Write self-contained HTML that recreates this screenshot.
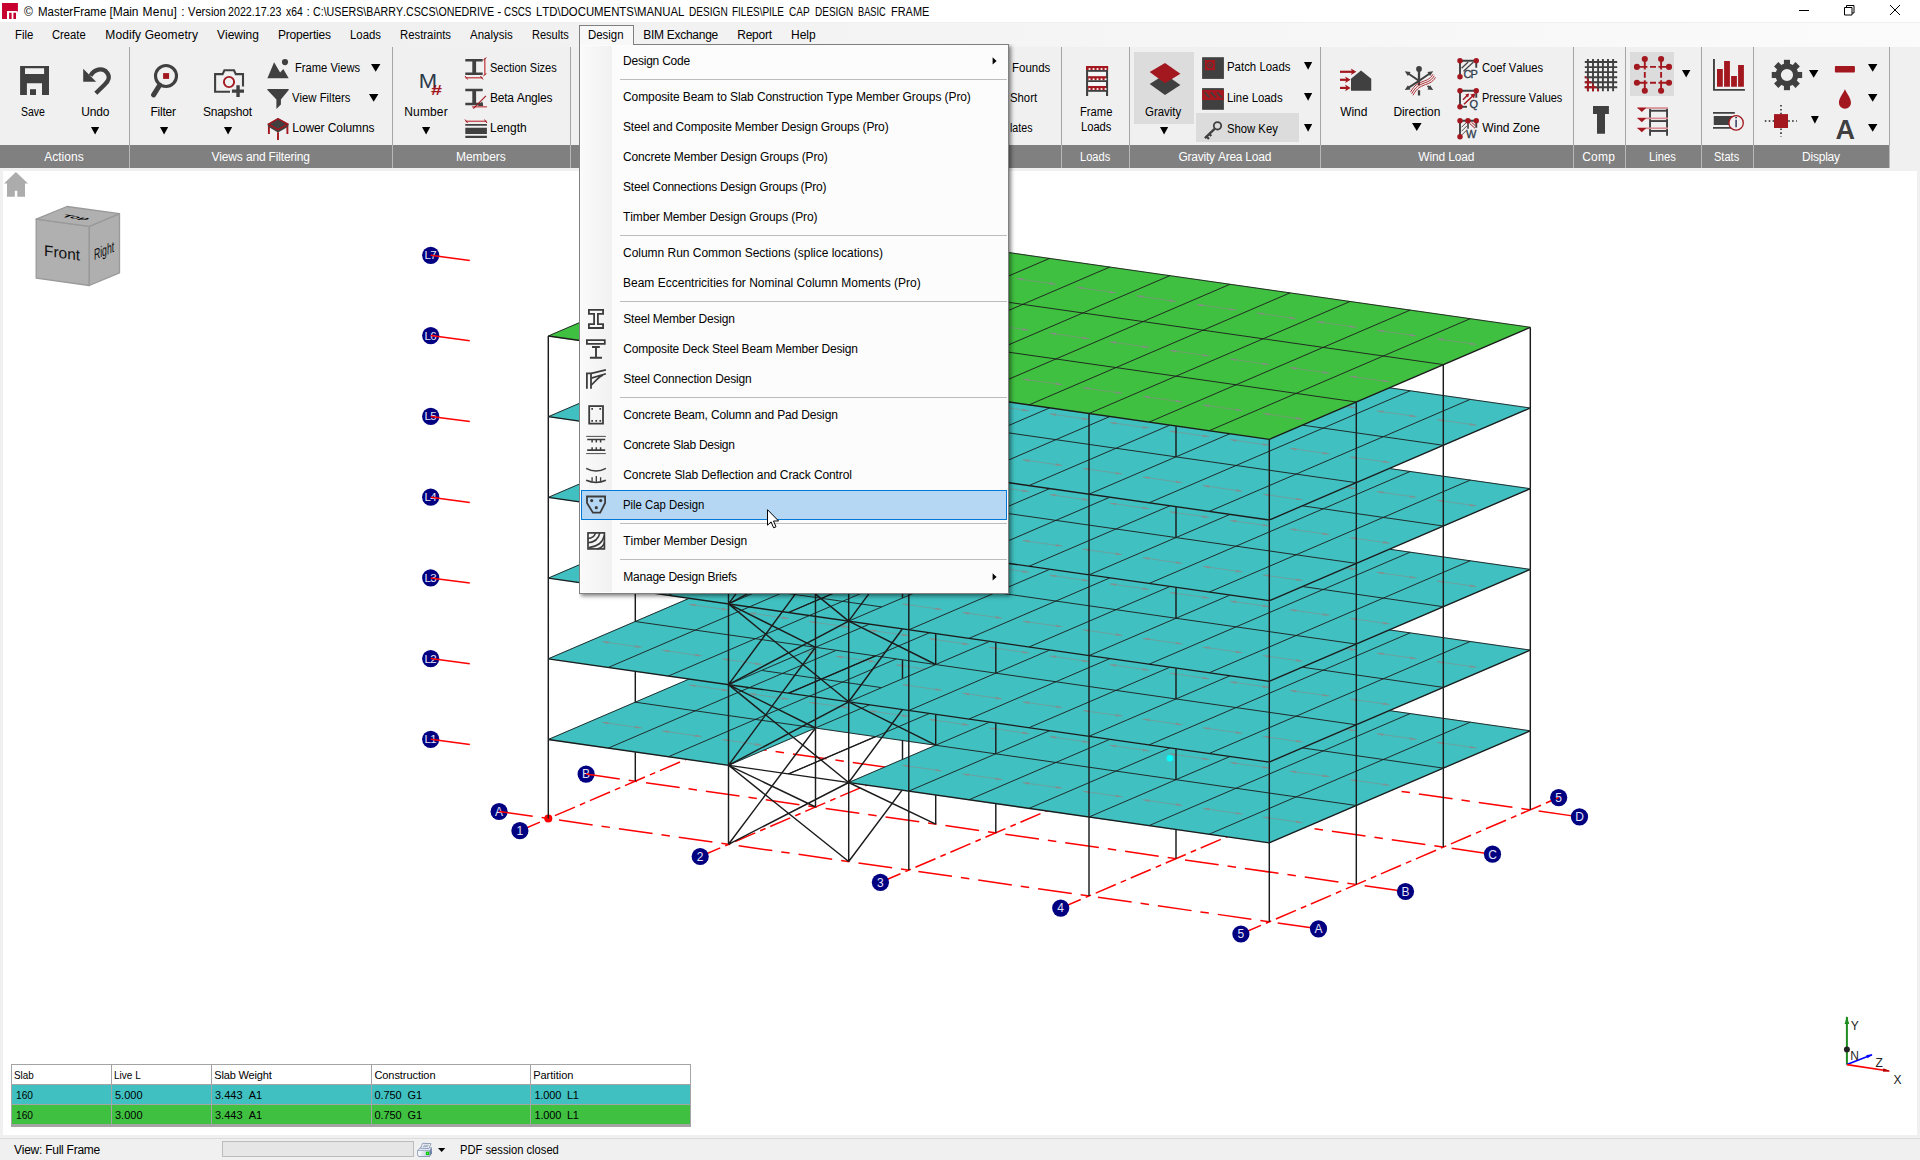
<!DOCTYPE html>
<html><head><meta charset="utf-8"><title>MasterFrame</title>
<style>
html,body{margin:0;padding:0;}
body{width:1920px;height:1160px;overflow:hidden;background:#f0f0f0;font-family:"Liberation Sans",sans-serif;position:relative;}
.t{position:absolute;white-space:nowrap;line-height:20px;height:20px;font-size:12px;font-kerning:none;}
.a{position:absolute;overflow:visible;}
.b{position:absolute;}
.gl{font-family:"Liberation Sans",sans-serif;font-size:12px;fill:#e4e4f6;text-anchor:middle;}
.ax{font-family:"Liberation Sans",sans-serif;font-size:12px;fill:#222;}
</style></head><body>

<div class="b" style="left:0;top:0;width:1920px;height:22px;background:#fff"></div>
<svg class="a" style="left:0;top:0" width="22" height="22" viewBox="0 0 22 22"><path d="M2 3H17.9V12.2Q17.6 10.9 16 10.9H7V19H2Z" fill="#c8002f"/><path d="M9.1 12.7H11.6V19H9.1ZM13.4 12.7H16V19H13.4Z" fill="#c8002f"/></svg>
<span class="t" style="left:24.00px;top:1.8px;font-size:12px;color:#000;letter-spacing:0.700px;">©</span>
<span class="t" style="left:37.50px;top:1.8px;font-size:12px;color:#000;transform:scaleX(0.9579);transform-origin:0.00px 0;">MasterFrame</span>
<span class="t" style="left:109.60px;top:1.8px;font-size:12px;color:#000;letter-spacing:-0.100px;">[Main</span>
<span class="t" style="left:142.50px;top:1.8px;font-size:12px;color:#000;letter-spacing:0.275px;">Menu]</span>
<span class="t" style="left:181.20px;top:1.8px;font-size:12px;color:#000;letter-spacing:-1.900px;">:</span>
<span class="t" style="left:187.50px;top:1.8px;font-size:12px;color:#000;transform:scaleX(0.9275);transform-origin:0.00px 0;">Version</span>
<span class="t" style="left:228.20px;top:1.8px;font-size:12px;color:#000;transform:scaleX(0.8902);transform-origin:0.00px 0;">2022.17.23</span>
<span class="t" style="left:285.80px;top:1.8px;font-size:12px;color:#000;transform:scaleX(0.8653);transform-origin:0.00px 0;">x64</span>
<span class="t" style="left:306.40px;top:1.8px;font-size:12px;color:#000;letter-spacing:-1.900px;">:</span>
<span class="t" style="left:312.70px;top:1.8px;font-size:12px;color:#000;transform:scaleX(0.8878);transform-origin:0.00px 0;">C:\USERS\BARRY.CSCS\ONEDRIVE</span>
<span class="t" style="left:497.30px;top:1.8px;font-size:12px;color:#000;letter-spacing:-0.600px;">-</span>
<span class="t" style="left:504.30px;top:1.8px;font-size:12px;color:#000;transform:scaleX(0.8228);transform-origin:0.00px 0;">CSCS</span>
<span class="t" style="left:535.70px;top:1.8px;font-size:12px;color:#000;transform:scaleX(0.9474);transform-origin:0.00px 0;">LTD\DOCUMENTS\MANUAL</span>
<span class="t" style="left:689.00px;top:1.8px;font-size:12px;color:#000;transform:scaleX(0.8413);transform-origin:0.00px 0;">DESIGN</span>
<span class="t" style="left:732.30px;top:1.8px;font-size:12px;color:#000;transform:scaleX(0.8293);transform-origin:0.00px 0;">FILES\PILE</span>
<span class="t" style="left:789.30px;top:1.8px;font-size:12px;color:#000;transform:scaleX(0.8381);transform-origin:0.00px 0;">CAP</span>
<span class="t" style="left:815.00px;top:1.8px;font-size:12px;color:#000;transform:scaleX(0.8326);transform-origin:0.00px 0;">DESIGN</span>
<span class="t" style="left:858.30px;top:1.8px;font-size:12px;color:#000;transform:scaleX(0.7694);transform-origin:0.00px 0;">BASIC</span>
<span class="t" style="left:891.00px;top:1.8px;font-size:12px;color:#000;transform:scaleX(0.9119);transform-origin:0.00px 0;">FRAME</span>
<svg class="a" style="left:1780px;top:0" width="140" height="22" viewBox="1780 0 140 22"><path d="M1799 10.5h10" stroke="#000" stroke-width="1"/><path d="M1844.5 7.5h7.5v7.5h-7.5zM1846.5 7.5v-2h7.5v7.5h-2" stroke="#000" stroke-width="1" fill="none"/><path d="M1890 5l10 10M1900 5l-10 10" stroke="#000" stroke-width="1"/></svg>
<div class="b" style="left:0;top:23px;width:1920px;height:24px;background:linear-gradient(90deg,#f0f0f0 0%,#f0f0f0 20%,#fbfbfb 100%)"></div>
<div class="b" style="left:579px;top:25px;width:55px;height:20px;background:#f8f8f8;border:1px solid #808080;border-bottom:none;box-sizing:border-box"></div>
<span class="t" style="left:15.00px;top:24.8px;font-size:12px;color:#000;transform:scaleX(0.9482);transform-origin:0.00px 0;">File</span>
<span class="t" style="left:52.30px;top:24.8px;font-size:12px;color:#000;transform:scaleX(0.9361);transform-origin:0.00px 0;">Create</span>
<span class="t" style="left:105.30px;top:24.8px;font-size:12px;color:#000;letter-spacing:0.093px;">Modify Geometry</span>
<span class="t" style="left:217.00px;top:24.8px;font-size:12px;color:#000;letter-spacing:-0.017px;">Viewing</span>
<span class="t" style="left:278.00px;top:24.8px;font-size:12px;color:#000;letter-spacing:-0.189px;">Properties</span>
<span class="t" style="left:350.00px;top:24.8px;font-size:12px;color:#000;transform:scaleX(0.9480);transform-origin:0.00px 0;">Loads</span>
<span class="t" style="left:400.00px;top:24.8px;font-size:12px;color:#000;transform:scaleX(0.9444);transform-origin:0.00px 0;">Restraints</span>
<span class="t" style="left:470.00px;top:24.8px;font-size:12px;color:#000;transform:scaleX(0.9553);transform-origin:0.00px 0;">Analysis</span>
<span class="t" style="left:532.30px;top:24.8px;font-size:12px;color:#000;transform:scaleX(0.9175);transform-origin:0.00px 0;">Results</span>
<span class="t" style="left:588.20px;top:24.8px;font-size:12px;color:#000;transform:scaleX(0.9519);transform-origin:0.00px 0;">Design</span>
<span class="t" style="left:643.20px;top:24.8px;font-size:12px;color:#000;letter-spacing:-0.273px;">BIM Exchange</span>
<span class="t" style="left:737.30px;top:24.8px;font-size:12px;color:#000;letter-spacing:-0.260px;">Report</span>
<span class="t" style="left:791.10px;top:24.8px;font-size:12px;color:#000;letter-spacing:-0.033px;">Help</span>
<div class="b" style="left:0;top:145px;width:1889px;height:23px;background:#808080"></div>
<div class="b" style="left:129.0px;top:47px;width:1px;height:98px;background:#a6a6a6"></div>
<div class="b" style="left:129.0px;top:145px;width:1px;height:23px;background:#b8b8b8"></div>
<div class="b" style="left:391.9px;top:47px;width:1px;height:98px;background:#a6a6a6"></div>
<div class="b" style="left:391.9px;top:145px;width:1px;height:23px;background:#b8b8b8"></div>
<div class="b" style="left:570.2px;top:47px;width:1px;height:98px;background:#a6a6a6"></div>
<div class="b" style="left:570.2px;top:145px;width:1px;height:23px;background:#b8b8b8"></div>
<div class="b" style="left:1060.9px;top:47px;width:1px;height:98px;background:#a6a6a6"></div>
<div class="b" style="left:1060.9px;top:145px;width:1px;height:23px;background:#b8b8b8"></div>
<div class="b" style="left:1128.9px;top:47px;width:1px;height:98px;background:#a6a6a6"></div>
<div class="b" style="left:1128.9px;top:145px;width:1px;height:23px;background:#b8b8b8"></div>
<div class="b" style="left:1319.6px;top:47px;width:1px;height:98px;background:#a6a6a6"></div>
<div class="b" style="left:1319.6px;top:145px;width:1px;height:23px;background:#b8b8b8"></div>
<div class="b" style="left:1573.0px;top:47px;width:1px;height:98px;background:#a6a6a6"></div>
<div class="b" style="left:1573.0px;top:145px;width:1px;height:23px;background:#b8b8b8"></div>
<div class="b" style="left:1624.8px;top:47px;width:1px;height:98px;background:#a6a6a6"></div>
<div class="b" style="left:1624.8px;top:145px;width:1px;height:23px;background:#b8b8b8"></div>
<div class="b" style="left:1701.0px;top:47px;width:1px;height:98px;background:#a6a6a6"></div>
<div class="b" style="left:1701.0px;top:145px;width:1px;height:23px;background:#b8b8b8"></div>
<div class="b" style="left:1753.1px;top:47px;width:1px;height:98px;background:#a6a6a6"></div>
<div class="b" style="left:1753.1px;top:145px;width:1px;height:23px;background:#b8b8b8"></div>
<div class="b" style="left:1889.1px;top:47px;width:1px;height:98px;background:#a6a6a6"></div>
<div class="b" style="left:1889.1px;top:145px;width:1px;height:23px;background:#b8b8b8"></div>
<span class="t" style="left:44.20px;top:146.8px;font-size:12px;color:#fff;letter-spacing:0.033px;">Actions</span>
<span class="t" style="left:211.50px;top:146.8px;font-size:12px;color:#fff;letter-spacing:-0.161px;">Views and Filtering</span>
<span class="t" style="left:456.00px;top:146.8px;font-size:12px;color:#fff;letter-spacing:-0.050px;">Members</span>
<span class="t" style="left:1079.50px;top:146.8px;font-size:12px;color:#fff;transform:scaleX(0.9235);transform-origin:0.00px 0;">Loads</span>
<span class="t" style="left:1178.50px;top:146.8px;font-size:12px;color:#fff;letter-spacing:-0.244px;">Gravity Area Load</span>
<span class="t" style="left:1418.30px;top:146.8px;font-size:12px;color:#fff;letter-spacing:-0.162px;">Wind Load</span>
<span class="t" style="left:1582.20px;top:146.8px;font-size:12px;color:#fff;letter-spacing:0.267px;">Comp</span>
<span class="t" style="left:1649.30px;top:146.8px;font-size:12px;color:#fff;transform:scaleX(0.9338);transform-origin:0.00px 0;">Lines</span>
<span class="t" style="left:1714.00px;top:146.8px;font-size:12px;color:#fff;transform:scaleX(0.9194);transform-origin:0.00px 0;">Stats</span>
<span class="t" style="left:1802.10px;top:146.8px;font-size:12px;color:#fff;letter-spacing:-0.233px;">Display</span>
<div class="b" style="left:1134px;top:52px;width:60px;height:71.5px;background:#dcdcdc"></div>
<div class="b" style="left:1196px;top:113px;width:103px;height:28.5px;background:#dcdcdc"></div>
<div class="b" style="left:1630px;top:52px;width:44px;height:44px;background:#dcdcdc"></div>
<span class="t" style="left:20.80px;top:101.8px;font-size:12px;color:#000;transform:scaleX(0.8759);transform-origin:0.00px 0;">Save</span>
<span class="t" style="left:81.30px;top:101.8px;font-size:12px;color:#000;letter-spacing:-0.200px;">Undo</span>
<svg class="a" style="left:91.3px;top:126.8px" width="8.2" height="7.6" viewBox="0 0 8.2 7.6"><path d="M0 0H8.2L4.1 7.6Z" fill="#000"/></svg>
<span class="t" style="left:150.40px;top:101.8px;font-size:12px;color:#000;letter-spacing:-0.220px;">Filter</span>
<svg class="a" style="left:159.6px;top:126.9px" width="8.2" height="7.6" viewBox="0 0 8.2 7.6"><path d="M0 0H8.2L4.1 7.6Z" fill="#000"/></svg>
<span class="t" style="left:203.00px;top:101.8px;font-size:12px;color:#000;letter-spacing:-0.243px;">Snapshot</span>
<svg class="a" style="left:223.5px;top:126.9px" width="8.2" height="7.6" viewBox="0 0 8.2 7.6"><path d="M0 0H8.2L4.1 7.6Z" fill="#000"/></svg>
<span class="t" style="left:295.40px;top:57.8px;font-size:12px;color:#000;transform:scaleX(0.9312);transform-origin:0.00px 0;">Frame Views</span>
<svg class="a" style="left:370.6px;top:64.1px" width="9.4" height="7.8" viewBox="0 0 9.4 7.8"><path d="M0 0H9.4L4.7 7.8Z" fill="#000"/></svg>
<span class="t" style="left:292.30px;top:87.8px;font-size:12px;color:#000;transform:scaleX(0.9434);transform-origin:0.00px 0;">View Filters</span>
<svg class="a" style="left:369.3px;top:94.2px" width="9.4" height="7.8" viewBox="0 0 9.4 7.8"><path d="M0 0H9.4L4.7 7.8Z" fill="#000"/></svg>
<span class="t" style="left:292.30px;top:117.8px;font-size:12px;color:#000;letter-spacing:-0.092px;">Lower Columns</span>
<span class="t" style="left:404.30px;top:101.8px;font-size:12px;color:#000;letter-spacing:0.140px;">Number</span>
<svg class="a" style="left:422.2px;top:126.8px" width="8.2" height="7.6" viewBox="0 0 8.2 7.6"><path d="M0 0H8.2L4.1 7.6Z" fill="#000"/></svg>
<span class="t" style="left:490.00px;top:57.8px;font-size:12px;color:#000;transform:scaleX(0.9175);transform-origin:0.00px 0;">Section Sizes</span>
<span class="t" style="left:490.00px;top:87.8px;font-size:12px;color:#000;letter-spacing:-0.230px;">Beta Angles</span>
<span class="t" style="left:490.00px;top:117.8px;font-size:12px;color:#000;letter-spacing:0.000px;">Length</span>
<span class="t" style="left:1011.50px;top:57.8px;font-size:12px;color:#000;transform:scaleX(0.9575);transform-origin:0.00px 0;">Founds</span>
<span class="t" style="left:1009.60px;top:87.8px;font-size:12px;color:#000;transform:scaleX(0.9443);transform-origin:0.00px 0;">Short</span>
<span class="t" style="left:1009.80px;top:117.8px;font-size:12px;color:#000;transform:scaleX(0.8893);transform-origin:0.00px 0;">lates</span>
<span class="t" style="left:1079.50px;top:101.8px;font-size:12px;color:#000;transform:scaleX(0.9337);transform-origin:0.00px 0;">Frame</span>
<span class="t" style="left:1080.50px;top:116.8px;font-size:12px;color:#000;transform:scaleX(0.9297);transform-origin:0.00px 0;">Loads</span>
<span class="t" style="left:1145.40px;top:101.8px;font-size:12px;color:#000;transform:scaleX(0.9526);transform-origin:0.00px 0;">Gravity</span>
<svg class="a" style="left:1159.5px;top:126.8px" width="8.2" height="7.6" viewBox="0 0 8.2 7.6"><path d="M0 0H8.2L4.1 7.6Z" fill="#000"/></svg>
<span class="t" style="left:1227.10px;top:56.8px;font-size:12px;color:#000;transform:scaleX(0.9520);transform-origin:0.00px 0;">Patch Loads</span>
<svg class="a" style="left:1304.4px;top:62.3px" width="8.2" height="7.8" viewBox="0 0 8.2 7.8"><path d="M0 0H8.2L4.1 7.8Z" fill="#000"/></svg>
<span class="t" style="left:1227.10px;top:87.8px;font-size:12px;color:#000;transform:scaleX(0.9472);transform-origin:0.00px 0;">Line Loads</span>
<svg class="a" style="left:1304.4px;top:93.2px" width="8.2" height="7.8" viewBox="0 0 8.2 7.8"><path d="M0 0H8.2L4.1 7.8Z" fill="#000"/></svg>
<span class="t" style="left:1227.10px;top:118.8px;font-size:12px;color:#000;transform:scaleX(0.9407);transform-origin:0.00px 0;">Show Key</span>
<svg class="a" style="left:1304.4px;top:123.9px" width="8.2" height="7.8" viewBox="0 0 8.2 7.8"><path d="M0 0H8.2L4.1 7.8Z" fill="#000"/></svg>
<span class="t" style="left:1340.20px;top:101.8px;font-size:12px;color:#000;letter-spacing:-0.067px;">Wind</span>
<span class="t" style="left:1393.40px;top:101.8px;font-size:12px;color:#000;letter-spacing:-0.050px;">Direction</span>
<svg class="a" style="left:1412.3px;top:122.8px" width="9.6" height="7.9" viewBox="0 0 9.6 7.9"><path d="M0 0H9.6L4.8 7.9Z" fill="#000"/></svg>
<span class="t" style="left:1482.30px;top:57.8px;font-size:12px;color:#000;transform:scaleX(0.9364);transform-origin:0.00px 0;">Coef Values</span>
<span class="t" style="left:1482.30px;top:87.8px;font-size:12px;color:#000;transform:scaleX(0.9117);transform-origin:0.00px 0;">Pressure Values</span>
<span class="t" style="left:1482.30px;top:117.8px;font-size:12px;color:#000;letter-spacing:-0.062px;">Wind Zone</span>
<svg class="a" style="left:1682.4px;top:70.2px" width="8.4" height="7.5" viewBox="0 0 8.4 7.5"><path d="M0 0H8.4L4.2 7.5Z" fill="#000"/></svg>
<svg class="a" style="left:1808.6px;top:69.9px" width="9.4" height="7.8" viewBox="0 0 9.4 7.8"><path d="M0 0H9.4L4.7 7.8Z" fill="#000"/></svg>
<svg class="a" style="left:1810.5px;top:115.7px" width="7.8" height="7.8" viewBox="0 0 7.8 7.8"><path d="M0 0H7.8L3.9 7.8Z" fill="#000"/></svg>
<svg class="a" style="left:1868.3px;top:64.1px" width="9.4" height="7.8" viewBox="0 0 9.4 7.8"><path d="M0 0H9.4L4.7 7.8Z" fill="#000"/></svg>
<svg class="a" style="left:1868.3px;top:94.0px" width="9.4" height="7.8" viewBox="0 0 9.4 7.8"><path d="M0 0H9.4L4.7 7.8Z" fill="#000"/></svg>
<svg class="a" style="left:1868.3px;top:123.9px" width="9.4" height="7.8" viewBox="0 0 9.4 7.8"><path d="M0 0H9.4L4.7 7.8Z" fill="#000"/></svg>
<svg class="a" style="left:0;top:0" width="1920" height="170" viewBox="0 0 1920 170"><path d="M20.1 66.1H49V95H42V83.2H26.9V95H20.1ZM25 68.2V73.9H44.1V68.2Z" fill="#404040" fill-rule="evenodd"/><rect x="30" y="89.2" width="6" height="5.8" fill="#404040"/><path d="M83.2 68.8V81.8H96.1Z" fill="#404040"/><path d="M90.5 75.8C94 69.2 102.5 67.2 106.8 72.3C110.6 76.8 108.3 81.3 105 84.2L95.8 93.3" fill="none" stroke="#404040" stroke-width="4.3"/><circle cx="166" cy="76" r="10.5" fill="none" stroke="#404040" stroke-width="3.1"/><path d="M159.6 85.2L153.6 94.8" stroke="#404040" stroke-width="5" stroke-linecap="round"/><rect x="163.1" y="73.1" width="6" height="5.8" fill="#a3171f"/><path d="M230 91.7H215.1V74.1H222.6L224.4 70.2H234L235.8 74.1H243V86.5" fill="none" stroke="#404040" stroke-width="2.1"/><circle cx="229" cy="82" r="5.1" fill="none" stroke="#a3171f" stroke-width="1.9"/><path d="M231.9 91.15H244M238.05 85.3V96.9" stroke="#404040" stroke-width="3.4"/><path d="M267.4 78.3L274.1 62.3L280.1 72.5L283.3 69L288.7 78.3Z" fill="#404040"/><circle cx="285" cy="62.1" r="3.1" fill="#404040"/><path d="M267.4 88.9H288.7V90L280.9 99.5V104.5L276.4 109V99.5L267.4 90Z" fill="#404040"/><path d="M267.8 124.1L278 118.1L288.5 124.1V126.6L278 132.4L267.8 126.6Z" fill="#404040"/><path d="M268.6 124.1L278 118.9L287.6 124.1L278 129.6Z" fill="none" stroke="#a3171f" stroke-width="1.6"/><path d="M268.9 126.8V134M287.4 126.8V134M278 132.3V139.9" stroke="#a3171f" stroke-width="1.9"/><text transform="translate(427.9 87.5) scale(1.13 1)" style="font-family:'Liberation Sans',sans-serif;font-size:19.5px;text-anchor:middle" fill="#2d3a4c">M</text><text transform="translate(436.3 95.2) scale(1.45 1.02)" style="font-family:'Liberation Sans',sans-serif;font-size:13.5px;font-weight:bold;font-style:italic;text-anchor:middle" fill="#a3171f">#</text><path d="M465.3 60.15H482.7M465.3 73.8H482.7" stroke="#404040" stroke-width="2.5"/><path d="M474.2 60V74" stroke="#404040" stroke-width="3.8"/><path d="M484.8 58.6V75M465.5 77.7H482.6" stroke="#c8585f" stroke-width="1.5"/><path d="M483.3 60L486.4 57.6M483.3 76L486.4 73.5M465 76L467.6 79.5M480.5 76L483 79.5" stroke="#a3171f" stroke-width="1"/><path d="M465.3 90.1H482.7M465.3 104H482.7" stroke="#404040" stroke-width="2.5"/><path d="M474.2 90V104" stroke="#404040" stroke-width="3.8"/><path d="M477.5 106.2H483.3L482.2 101.4Z" fill="#404040"/><path d="M472 106.8H487" stroke="#c8585f" stroke-width="1.4"/><path d="M473.3 108.6L485.9 95.9" stroke="#a3171f" stroke-width="1.1"/><path d="M465.5 121.3H486.8" stroke="#c8585f" stroke-width="1.5"/><path d="M465 119.5L467.6 123M484.4 119.5L487 123" stroke="#a3171f" stroke-width="1"/><path d="M465.3 124.1H486.9V125.8H465.3ZM465.3 127.8H486.9V133.9H465.3ZM465.3 135.8H486.9V137.9H465.3Z" fill="#404040"/><path d="M1087.1 66V95.9M1107.05 66V95.9" stroke="#404040" stroke-width="2.1"/><rect x="1086.05" y="66" width="22.05" height="4" fill="#a3171f"/><rect x="1088.1" y="70" width="17.9" height="1.8" fill="#404040"/><rect x="1088.6" y="68.2" width="1.9" height="1.7" fill="#fff"/><rect x="1092.6" y="68.2" width="1.9" height="1.7" fill="#fff"/><rect x="1096.6" y="68.2" width="1.9" height="1.7" fill="#fff"/><rect x="1100.6" y="68.2" width="1.9" height="1.7" fill="#fff"/><rect x="1104.6" y="68.2" width="1.9" height="1.7" fill="#fff"/><rect x="1088.1" y="76.2" width="17.9" height="4" fill="#a3171f"/><rect x="1088.1" y="80.2" width="17.9" height="1.8" fill="#404040"/><rect x="1088.6" y="78.4" width="1.9" height="1.7" fill="#fff"/><rect x="1092.6" y="78.4" width="1.9" height="1.7" fill="#fff"/><rect x="1096.6" y="78.4" width="1.9" height="1.7" fill="#fff"/><rect x="1100.6" y="78.4" width="1.9" height="1.7" fill="#fff"/><rect x="1104.6" y="78.4" width="1.9" height="1.7" fill="#fff"/><rect x="1088.1" y="86" width="17.9" height="4" fill="#a3171f"/><rect x="1088.1" y="90" width="17.9" height="1.8" fill="#404040"/><rect x="1088.6" y="88.2" width="1.9" height="1.7" fill="#fff"/><rect x="1092.6" y="88.2" width="1.9" height="1.7" fill="#fff"/><rect x="1096.6" y="88.2" width="1.9" height="1.7" fill="#fff"/><rect x="1100.6" y="88.2" width="1.9" height="1.7" fill="#fff"/><rect x="1104.6" y="88.2" width="1.9" height="1.7" fill="#fff"/><rect x="1088.4" y="72.5" width="17.4" height="3" fill="#f8f8f8"/><rect x="1088.4" y="82.4" width="17.4" height="3" fill="#f8f8f8"/><path d="M1149.7 84.1L1165 74.2L1180.4 85L1165 95.1Z" fill="#404040"/><path d="M1149.7 72.1L1165 62.9L1180.4 73.8L1165 83.2Z" fill="#a3171f"/><rect x="1202.1" y="57.2" width="21.8" height="21.7" fill="#404040"/><rect x="1205" y="60" width="10.1" height="10.1" fill="#a3171f"/><circle cx="1210" cy="65.1" r="2.7" fill="none" stroke="#404040" stroke-width="0.9"/><path d="M1208.2 63.3L1211.8 66.9M1211.8 63.3L1208.2 66.9" stroke="#404040" stroke-width="0.8"/><rect x="1202.1" y="88.1" width="21.8" height="21.7" fill="#404040"/><rect x="1202.1" y="90" width="21.8" height="10" fill="#a3171f"/><path d="M1204.5 92.3L1209.5 97.5M1210.8 92.3L1215.8 97.5M1217 92.3L1222 97.5" stroke="#404040" stroke-width="1.8"/><circle cx="1217.5" cy="125.8" r="3.7" fill="none" stroke="#404040" stroke-width="1.8"/><path d="M1214.6 128.8L1204.9 138.2M1206.6 136.5L1209 139M1209.3 134L1211.3 136" stroke="#404040" stroke-width="2.3"/><path d="M1351 90.8V78.75L1361 70.4L1371.25 78.75V90.8Z" fill="#404040"/><path d="M1340 71.8H1353.2" stroke="#a3171f" stroke-width="2.2"/><path d="M1350.9 68.5L1356.4 71.8L1350.9 75.1L1352.2 71.8Z" fill="#a3171f"/><path d="M1340 79.8H1347.4" stroke="#a3171f" stroke-width="2.2"/><path d="M1345.1 76.5L1350.6 79.8L1345.1 83.1L1346.4 79.8Z" fill="#a3171f"/><path d="M1340 87.9H1347.4" stroke="#a3171f" stroke-width="2.2"/><path d="M1345.1 84.6L1350.6 87.9L1345.1 91.2L1346.4 87.9Z" fill="#a3171f"/><circle cx="1419" cy="69" r="2.9" fill="#404040"/><path d="M1419 69V85.2M1419 90.2V95.4" stroke="#404040" stroke-width="2.3"/><path d="M1407.5 73L1419 80.8L1430.5 73M1407.5 88.3L1419 80.8M1427.5 86L1430.5 88" fill="none" stroke="#404040" stroke-width="2"/><path d="M1404.8 71.2L1410.6 71.9L1407.9 76ZM1433.2 71.2L1427.4 71.9L1430.1 76ZM1404.8 90L1410.6 89.4L1407.9 85.2ZM1433.2 90L1427.4 89.4L1430.1 85.2Z" fill="#404040"/><path d="M1410.46 92.19C1414.76 84.44 1418.26 83.44 1421.76 81.94S1429.76 79.94 1432.96 74.24" fill="none" stroke="#a3171f" stroke-width="0.9"/><path d="M1411.7 93.75C1416 86 1419.5 85 1423 83.5S1431 81.5 1434.2 75.8" fill="none" stroke="#a3171f" stroke-width="0.9"/><path d="M1412.94 95.31C1417.24 87.56 1420.74 86.56 1424.24 85.06S1432.24 83.06 1435.44 77.36" fill="none" stroke="#a3171f" stroke-width="0.9"/><path d="M1476.25 67.8V60.8M1476.25 60.8H1460V76.8" fill="none" stroke="#404040" stroke-width="1.9"/><path d="M1461.6 68.3L1468.2 62M1463.5 71.3L1473.5 62" stroke="#404040" stroke-width="1.2"/><text x="1463.4" y="78.3" style="font-family:'Liberation Sans',sans-serif;font-size:11px;letter-spacing:-0.8px" fill="#2d3a4c" stroke="#2d3a4c" stroke-width="0.3">CP</text><circle cx="1460" cy="60.8" r="2.75" fill="#a3171f"/><circle cx="1476.25" cy="60.8" r="2.75" fill="#a3171f"/><circle cx="1460" cy="76.8" r="2.75" fill="#a3171f"/><path d="M1476.25 97.8V90.8M1476.25 90.8H1460V106.8" fill="none" stroke="#404040" stroke-width="1.9"/><path d="M1460 106.8H1467" stroke="#404040" stroke-width="1.9"/><path d="M1463 99.8L1467.5 95.3M1464 104.3L1473.5 95.3" stroke="#a3171f" stroke-width="1.5"/><path d="M1469.3 93.4L1465.3 94.6L1468 97.6ZM1475.5 93.2L1470.3 94.6L1474 98.4Z" fill="#a3171f"/><text x="1469.6" y="108.1" style="font-family:'Liberation Sans',sans-serif;font-size:11px" fill="#2d3a4c" stroke="#2d3a4c" stroke-width="0.3">Q</text><circle cx="1460" cy="90.8" r="2.75" fill="#a3171f"/><circle cx="1476.25" cy="90.8" r="2.75" fill="#a3171f"/><circle cx="1460" cy="106.8" r="2.75" fill="#a3171f"/><path d="M1476.25 127.8V120.8M1476.25 120.8H1460V136.8" fill="none" stroke="#404040" stroke-width="1.9"/><path d="M1468 120.8V128.8" stroke="#404040" stroke-width="1.6"/><path d="M1461.5 127.3L1466.5 122.3M1461.5 131.3L1467 125.8M1462 134.8L1466 130.8" stroke="#404040" stroke-width="0.9"/><path d="M1469.5 123.3L1475 128.3M1471.5 122.3L1475.5 125.8" stroke="#a3171f" stroke-width="1"/><text x="1466" y="138.2" style="font-family:'Liberation Sans',sans-serif;font-size:11px" fill="#2d3a4c" stroke="#2d3a4c" stroke-width="0.3">W</text><circle cx="1460" cy="120.8" r="2.75" fill="#a3171f"/><circle cx="1476.25" cy="120.8" r="2.75" fill="#a3171f"/><circle cx="1460" cy="136.8" r="2.75" fill="#a3171f"/><circle cx="1467.9" cy="120.8" r="2.75" fill="#a3171f"/><path d="M1587.9 58.9V91.25M1593 58.9V91.25M1598.1 58.9V91.25M1602.9 58.9V91.25M1608 58.9V91.25M1613.1 58.9V91.25M1584.8 62H1617.2M1584.8 67.1H1617.2M1584.8 72.1H1617.2M1584.8 77.2H1617.2M1584.8 82.25H1617.2M1584.8 87.3H1617.2" stroke="#404040" stroke-width="1.9"/><clipPath id="cg"><path d="M1584 74.5L1601 92H1584Z"/></clipPath><path d="M1587.9 58.9V91.25M1593 58.9V91.25M1598.1 58.9V91.25M1602.9 58.9V91.25M1608 58.9V91.25M1613.1 58.9V91.25M1584.8 62H1617.2M1584.8 67.1H1617.2M1584.8 72.1H1617.2M1584.8 77.2H1617.2M1584.8 82.25H1617.2M1584.8 87.3H1617.2" stroke="#a3171f" stroke-width="1.9" clip-path="url(#cg)"/><path d="M1593 106.1H1608.9V113.9H1605V133.7H1597V113.9H1593Z" fill="#404040"/><path d="M1644.8 59.1V69.5M1661.1 59.1V69.5M1644.8 80.2V90.8M1661.1 80.2V90.8M1636.9 66.9H1647.4M1658.5 66.9H1669M1636.9 82.8H1647.4M1658.5 82.8H1669" stroke="#a3171f" stroke-width="1.9"/><path d="M1650 66.9H1656M1650 82.8H1656M1644.8 72H1644.8V77.8M1661.1 72V77.8" stroke="#a3171f" stroke-width="1.9"/><circle cx="1644.8" cy="59.1" r="3.05" fill="#a3171f"/><circle cx="1661.1" cy="59.1" r="3.05" fill="#a3171f"/><circle cx="1644.8" cy="90.8" r="3.05" fill="#a3171f"/><circle cx="1661.1" cy="90.8" r="3.05" fill="#a3171f"/><circle cx="1636.9" cy="66.9" r="3.05" fill="#a3171f"/><circle cx="1636.9" cy="82.8" r="3.05" fill="#a3171f"/><circle cx="1669" cy="66.9" r="3.05" fill="#a3171f"/><circle cx="1669" cy="82.8" r="3.05" fill="#a3171f"/><path d="M1650.05 108.6V135.8M1667.05 108.6V135.8" stroke="#404040" stroke-width="1.9"/><rect x="1637.3" y="107.2" width="30.7" height="1.7" fill="#d98d92"/><rect x="1650" y="109.8" width="17" height="1.9" fill="#404040"/><path d="M1637.3 107.8H1646.3L1641.8 112Z" fill="#a3171f"/><rect x="1637.3" y="117.5" width="30.7" height="1.7" fill="#d98d92"/><rect x="1650" y="120.1" width="17" height="1.9" fill="#404040"/><path d="M1637.3 118.1H1646.3L1641.8 122.3Z" fill="#a3171f"/><rect x="1637.3" y="127.4" width="30.7" height="1.7" fill="#d98d92"/><rect x="1650" y="130" width="17" height="1.9" fill="#404040"/><path d="M1637.3 128H1646.3L1641.8 132.2Z" fill="#a3171f"/><path d="M1713.95 58.9V89.85H1744.9" fill="none" stroke="#404040" stroke-width="1.9"/><path d="M1717 69H1722.8V86.8H1717ZM1724.1 61.1H1729.9V86.8H1724.1ZM1731.1 76.1H1736.9V86.8H1731.1ZM1738.1 65H1743.9V86.8H1738.1Z" fill="#a3171f"/><path d="M1713 112.1H1734.8V113.75H1713ZM1713.75 116.1H1734.4V125H1713.75ZM1713 127.1H1731V128.75H1713Z" fill="#404040"/><circle cx="1736.1" cy="122.9" r="7.2" fill="#f0f0f0" stroke="#a3171f" stroke-width="1.3"/><path d="M1736.1 119.8V127.3" stroke="#333a5c" stroke-width="1.5"/><circle cx="1736.1" cy="117.6" r="0.95" fill="#333a5c"/><circle cx="1786.95" cy="75" r="8.75" fill="none" stroke="#404040" stroke-width="5.3"/><rect x="1783.9" y="59.8" width="6.1" height="5.8" fill="#404040" transform="rotate(0 1786.95 75)"/><rect x="1783.9" y="59.8" width="6.1" height="5.8" fill="#404040" transform="rotate(45 1786.95 75)"/><rect x="1783.9" y="59.8" width="6.1" height="5.8" fill="#404040" transform="rotate(90 1786.95 75)"/><rect x="1783.9" y="59.8" width="6.1" height="5.8" fill="#404040" transform="rotate(135 1786.95 75)"/><rect x="1783.9" y="59.8" width="6.1" height="5.8" fill="#404040" transform="rotate(180 1786.95 75)"/><rect x="1783.9" y="59.8" width="6.1" height="5.8" fill="#404040" transform="rotate(225 1786.95 75)"/><rect x="1783.9" y="59.8" width="6.1" height="5.8" fill="#404040" transform="rotate(270 1786.95 75)"/><rect x="1783.9" y="59.8" width="6.1" height="5.8" fill="#404040" transform="rotate(315 1786.95 75)"/><path d="M1764.8 120.9H1796.8M1781 105V136.8" stroke="#222" stroke-width="1.5" stroke-dasharray="1.6 2.3"/><rect x="1774" y="114.1" width="14" height="13.9" fill="#a3171f"/><rect x="1834.9" y="66" width="20" height="6.5" rx="1" fill="#a3171f"/><path d="M1844.95 89.3C1847.5 94.5 1851 98.5 1851 102.8A6.05 6.05 0 0 1 1838.9 102.8C1838.9 98.5 1842.4 94.5 1844.95 89.3Z" fill="#a3171f"/><text x="1845.2" y="138.7" style="font-family:'Liberation Sans',sans-serif;font-size:27px;font-weight:bold;text-anchor:middle" fill="#404040">A</text><path d="M1835.3 138.7L1842.3 120.5" stroke="#f0f0f0" stroke-width="0.9"/></svg>
<div class="b" style="left:3px;top:171px;width:1914px;height:964px;background:#fff"></div>
<div class="b" style="left:0;top:1138px;width:1920px;height:1px;background:#dcdcdc"></div>
<svg class="a" style="left:0;top:0" width="1920" height="1160" viewBox="0 0 1920 1160">
<circle cx="837.7" cy="694.3" r="8.6" fill="#000080"/>
<text x="837.7" y="698.6" class="gl">1</text>
<circle cx="1017.9" cy="720.2" r="8.6" fill="#000080"/>
<text x="1017.9" y="724.5" class="gl">2</text>
<circle cx="1198.2" cy="746" r="8.6" fill="#000080"/>
<text x="1198.2" y="750.3" class="gl">3</text>
<circle cx="1378.4" cy="771.8" r="8.6" fill="#000080"/>
<text x="1378.4" y="776.1" class="gl">4</text>
<circle cx="1558.7" cy="797.6" r="8.6" fill="#000080"/>
<text x="1558.7" y="801.9" class="gl">5</text>
<circle cx="499.1" cy="811.5" r="8.6" fill="#000080"/>
<text x="499.1" y="815.8" class="gl">A</text>
<circle cx="586.1" cy="774.1" r="8.6" fill="#000080"/>
<text x="586.1" y="778.4" class="gl">B</text>
<circle cx="673.1" cy="736.8" r="8.6" fill="#000080"/>
<text x="673.1" y="741.1" class="gl">C</text>
<circle cx="760.1" cy="699.5" r="8.6" fill="#000080"/>
<text x="760.1" y="703.8" class="gl">D</text>
<path d="M499.1 811.5L1318.5 928.8M586.1 774.1L1405.5 891.5M673.1 736.8L1492.5 854.2M760.1 699.5L1579.5 816.9" stroke="#ff0000" stroke-width="1.5" stroke-dasharray="34 9 8.5 9" fill="none"/>
<path d="M519.9 830.7L837.7 694.3M700.2 856.5L1017.9 720.2M880.4 882.3L1198.2 746M1060.7 908.1L1378.4 771.8M1240.9 934L1558.7 797.6" stroke="#ff0000" stroke-width="1.5" stroke-dasharray="21.8 5.4 5.8 5.1" fill="none"/>
<circle cx="519.9" cy="830.7" r="8.6" fill="#000080"/>
<text x="519.9" y="835" class="gl">1</text>
<circle cx="700.2" cy="856.5" r="8.6" fill="#000080"/>
<text x="700.2" y="860.8" class="gl">2</text>
<circle cx="880.4" cy="882.3" r="8.6" fill="#000080"/>
<text x="880.4" y="886.6" class="gl">3</text>
<circle cx="1060.7" cy="908.1" r="8.6" fill="#000080"/>
<text x="1060.7" y="912.4" class="gl">4</text>
<circle cx="1240.9" cy="934" r="8.6" fill="#000080"/>
<text x="1240.9" y="938.3" class="gl">5</text>
<circle cx="1318.5" cy="928.8" r="8.6" fill="#000080"/>
<text x="1318.5" y="933.1" class="gl">A</text>
<circle cx="1405.5" cy="891.5" r="8.6" fill="#000080"/>
<text x="1405.5" y="895.8" class="gl">B</text>
<circle cx="1492.5" cy="854.2" r="8.6" fill="#000080"/>
<text x="1492.5" y="858.5" class="gl">C</text>
<circle cx="1579.5" cy="816.9" r="8.6" fill="#000080"/>
<text x="1579.5" y="821.2" class="gl">D</text>
<circle cx="548.3" cy="818.5" r="4" fill="#ff0000"/>
<path d="M548.3 818.5L548.3 739.5M635.3 781.2L635.3 702.2M722.3 743.8L722.3 664.8M809.3 706.5L809.3 627.5M728.5 844.3L728.5 765.3M815.5 807L815.5 728M902.5 769.7L902.5 690.7M989.5 732.3L989.5 653.3M908.8 870.1L908.8 791.1M995.8 832.8L995.8 753.8M1082.8 795.5L1082.8 716.5M1169.8 758.2L1169.8 679.2M1089 896L1089 817M1176 858.6L1176 779.6M1263 821.3L1263 742.3M1350 784L1350 705M1269.3 921.8L1269.3 842.8M1356.3 884.5L1356.3 805.5M1443.3 847.1L1443.3 768.1M1530.3 809.8L1530.3 730.8M848.7 861.5L848.7 782.5M935.7 824.2L935.7 745.2M728.5 844.3L848.7 782.5M848.7 861.5L728.5 765.3M728.5 844.3L815.5 728M815.5 807L728.5 765.3M848.7 861.5L935.7 745.2M935.7 824.2L848.7 782.5" stroke="#1c1c1c" stroke-width="1.45" fill="none"/>
<path d="M548.3 739.5L608.4 748.1L695.4 710.8L635.3 702.2ZM635.3 702.2L695.4 710.8L782.4 673.4L722.3 664.8ZM722.3 664.8L782.4 673.4L869.4 636.1L809.3 627.5ZM608.4 748.1L668.5 756.7L755.5 719.4L695.4 710.8ZM695.4 710.8L755.5 719.4L842.5 682.1L782.4 673.4ZM782.4 673.4L842.5 682.1L929.5 644.7L869.4 636.1ZM668.5 756.7L728.5 765.3L815.5 728L755.5 719.4ZM755.5 719.4L815.5 728L902.5 690.7L842.5 682.1ZM842.5 682.1L902.5 690.7L989.5 653.3L929.5 644.7ZM815.5 728L875.6 736.6L962.6 699.3L902.5 690.7ZM902.5 690.7L962.6 699.3L1049.6 661.9L989.5 653.3ZM875.6 736.6L935.7 745.2L1022.7 707.9L962.6 699.3ZM962.6 699.3L1022.7 707.9L1109.7 670.6L1049.6 661.9ZM848.7 782.5L908.8 791.1L995.8 753.8L935.7 745.2ZM935.7 745.2L995.8 753.8L1082.8 716.5L1022.7 707.9ZM1022.7 707.9L1082.8 716.5L1169.8 679.2L1109.7 670.6ZM908.8 791.1L968.9 799.8L1055.9 762.4L995.8 753.8ZM995.8 753.8L1055.9 762.4L1142.9 725.1L1082.8 716.5ZM1082.8 716.5L1142.9 725.1L1229.9 687.8L1169.8 679.2ZM968.9 799.8L1029 808.4L1116 771L1055.9 762.4ZM1055.9 762.4L1116 771L1203 733.7L1142.9 725.1ZM1142.9 725.1L1203 733.7L1290 696.4L1229.9 687.8ZM1029 808.4L1089 817L1176 779.6L1116 771ZM1116 771L1176 779.6L1263 742.3L1203 733.7ZM1203 733.7L1263 742.3L1350 705L1290 696.4ZM1089 817L1149.1 825.6L1236.1 788.3L1176 779.6ZM1176 779.6L1236.1 788.3L1323.1 750.9L1263 742.3ZM1263 742.3L1323.1 750.9L1410.1 713.6L1350 705ZM1149.1 825.6L1209.2 834.2L1296.2 796.9L1236.1 788.3ZM1236.1 788.3L1296.2 796.9L1383.2 759.5L1323.1 750.9ZM1323.1 750.9L1383.2 759.5L1470.2 722.2L1410.1 713.6ZM1209.2 834.2L1269.3 842.8L1356.3 805.5L1296.2 796.9ZM1296.2 796.9L1356.3 805.5L1443.3 768.1L1383.2 759.5ZM1383.2 759.5L1443.3 768.1L1530.3 730.8L1470.2 722.2Z" fill="#40c0c0" stroke="#40c0c0" stroke-width="0.6"/>
<path d="M602 722.3L641.7 728M689 685L728.7 690.6M776 647.6L815.7 653.3M662.1 730.9L701.8 736.6M749.1 693.6L788.8 699.3M836.1 656.2L875.8 661.9M722.2 739.5L761.8 745.2M809.2 702.2L848.8 707.9M896.2 664.9L935.8 670.5M869.3 710.8L908.9 716.5M956.3 673.5L995.9 679.1M929.3 719.4L969 725.1M1016.3 682.1L1056 687.8M902.4 765.3L942.1 771M989.4 728L1029.1 733.7M1076.4 690.7L1116.1 696.4M962.5 773.9L1002.2 779.6M1049.5 736.6L1089.2 742.3M1136.5 699.3L1176.2 705M1022.6 782.6L1062.3 788.2M1109.6 745.2L1149.3 750.9M1196.6 707.9L1236.3 713.6M1082.7 791.2L1122.3 796.8M1169.7 753.8L1209.3 759.5M1256.7 716.5L1296.3 722.2M1142.8 799.8L1182.4 805.5M1229.8 762.4L1269.4 768.1M1316.8 725.1L1356.4 730.8M1202.8 808.4L1242.5 814.1M1289.8 771.1L1329.5 776.7M1376.8 733.7L1416.5 739.4M1262.9 817L1302.6 822.7M1349.9 779.7L1389.6 785.3M1436.9 742.3L1476.6 748" stroke="#8a8a8a" stroke-opacity="0.6" stroke-width="1" fill="none"/>
<path d="M602 722.3L609.1 722L607.9 724.4ZM641.7 728L635.8 725.8L634.6 728.2ZM689 685L696.1 684.7L694.9 687.1ZM728.7 690.6L722.8 688.5L721.6 690.9ZM776 647.6L783.1 647.4L781.9 649.8ZM815.7 653.3L809.8 651.2L808.6 653.6ZM662.1 730.9L669.2 730.6L668 733ZM701.8 736.6L695.9 734.5L694.7 736.9ZM749.1 693.6L756.2 693.3L755 695.7ZM788.8 699.3L782.9 697.1L781.7 699.5ZM836.1 656.2L843.2 656L842 658.4ZM875.8 661.9L869.9 659.8L868.7 662.2ZM722.2 739.5L729.3 739.2L728.1 741.6ZM761.8 745.2L755.9 743.1L754.7 745.5ZM809.2 702.2L816.3 701.9L815.1 704.3ZM848.8 707.9L842.9 705.7L841.7 708.1ZM896.2 664.9L903.3 664.6L902.1 667ZM935.8 670.5L929.9 668.4L928.7 670.8ZM869.3 710.8L876.4 710.5L875.2 712.9ZM908.9 716.5L903 714.3L901.8 716.7ZM956.3 673.5L963.4 673.2L962.2 675.6ZM995.9 679.1L990 677L988.8 679.4ZM929.3 719.4L936.4 719.1L935.2 721.5ZM969 725.1L963.1 723L961.9 725.4ZM1016.3 682.1L1023.4 681.8L1022.2 684.2ZM1056 687.8L1050.1 685.6L1048.9 688ZM902.4 765.3L909.5 765.1L908.3 767.5ZM942.1 771L936.2 768.9L935 771.3ZM989.4 728L996.5 727.7L995.3 730.1ZM1029.1 733.7L1023.2 731.6L1022 734ZM1076.4 690.7L1083.5 690.4L1082.3 692.8ZM1116.1 696.4L1110.2 694.2L1109 696.6ZM962.5 773.9L969.6 773.7L968.4 776.1ZM1002.2 779.6L996.3 777.5L995.1 779.9ZM1049.5 736.6L1056.6 736.3L1055.4 738.7ZM1089.2 742.3L1083.3 740.2L1082.1 742.6ZM1136.5 699.3L1143.6 699L1142.4 701.4ZM1176.2 705L1170.3 702.8L1169.1 705.2ZM1022.6 782.6L1029.7 782.3L1028.5 784.7ZM1062.3 788.2L1056.4 786.1L1055.2 788.5ZM1109.6 745.2L1116.7 745L1115.5 747.4ZM1149.3 750.9L1143.4 748.8L1142.2 751.2ZM1196.6 707.9L1203.7 707.6L1202.5 710ZM1236.3 713.6L1230.4 711.4L1229.2 713.8ZM1082.7 791.2L1089.8 790.9L1088.6 793.3ZM1122.3 796.8L1116.4 794.7L1115.2 797.1ZM1169.7 753.8L1176.8 753.6L1175.6 756ZM1209.3 759.5L1203.4 757.4L1202.2 759.8ZM1256.7 716.5L1263.8 716.2L1262.6 718.6ZM1296.3 722.2L1290.4 720.1L1289.2 722.5ZM1142.8 799.8L1149.9 799.5L1148.7 801.9ZM1182.4 805.5L1176.5 803.3L1175.3 805.7ZM1229.8 762.4L1236.9 762.2L1235.7 764.6ZM1269.4 768.1L1263.5 766L1262.3 768.4ZM1316.8 725.1L1323.9 724.8L1322.7 727.2ZM1356.4 730.8L1350.5 728.7L1349.3 731.1ZM1202.8 808.4L1209.9 808.1L1208.7 810.5ZM1242.5 814.1L1236.6 811.9L1235.4 814.3ZM1289.8 771.1L1296.9 770.8L1295.7 773.2ZM1329.5 776.7L1323.6 774.6L1322.4 777ZM1376.8 733.7L1383.9 733.5L1382.7 735.9ZM1416.5 739.4L1410.6 737.3L1409.4 739.7ZM1262.9 817L1270 816.7L1268.8 819.1ZM1302.6 822.7L1296.7 820.5L1295.5 822.9ZM1349.9 779.7L1357 779.4L1355.8 781.8ZM1389.6 785.3L1383.7 783.2L1382.5 785.6ZM1436.9 742.3L1444 742.1L1442.8 744.5ZM1476.6 748L1470.7 745.9L1469.5 748.3Z" fill="#8a8a8a" fill-opacity="0.8"/>
<path d="M635.3 702.2L1356.3 805.5M722.3 664.8L1443.3 768.1M809.3 627.5L1530.3 730.8M548.3 739.5L809.3 627.5M608.4 748.1L869.4 636.1M668.5 756.7L929.5 644.7M728.5 765.3L989.5 653.3M788.6 773.9L1049.6 661.9M848.7 782.5L1109.7 670.6M908.8 791.1L1169.8 679.2M968.9 799.8L1229.9 687.8M1029 808.4L1290 696.4M1089 817L1350 705M1149.1 825.6L1410.1 713.6M1209.2 834.2L1470.2 722.2" stroke="#1c1c1c" stroke-width="0.9" fill="none"/>
<path d="M548.3 739.5L1269.3 842.8M1269.3 842.8L1530.3 730.8M788.6 773.9L875.6 736.6" stroke="#1c1c1c" stroke-width="1.35" fill="none"/>
<path d="M548.3 739.5L548.3 658.8M635.3 702.2L635.3 621.5M722.3 664.8L722.3 584.1M809.3 627.5L809.3 546.8M728.5 765.3L728.5 684.6M815.5 728L815.5 647.3M902.5 690.7L902.5 610M989.5 653.3L989.5 572.6M908.8 791.1L908.8 710.5M995.8 753.8L995.8 673.1M1082.8 716.5L1082.8 635.8M1169.8 679.2L1169.8 598.5M1089 817L1089 736.3M1176 779.6L1176 698.9M1263 742.3L1263 661.6M1350 705L1350 624.3M1269.3 842.8L1269.3 762.1M1356.3 805.5L1356.3 724.8M1443.3 768.1L1443.3 687.4M1530.3 730.8L1530.3 650.1M848.7 782.5L848.7 701.8M935.7 745.2L935.7 664.5M728.5 765.3L848.7 701.8M848.7 782.5L728.5 684.6M728.5 765.3L815.5 647.3M815.5 728L728.5 684.6M848.7 782.5L935.7 664.5M935.7 745.2L848.7 701.8" stroke="#1c1c1c" stroke-width="1.45" fill="none"/>
<path d="M548.3 658.8L608.4 667.4L695.4 630.1L635.3 621.5ZM635.3 621.5L695.4 630.1L782.4 592.7L722.3 584.1ZM722.3 584.1L782.4 592.7L869.4 555.4L809.3 546.8ZM608.4 667.4L668.5 676L755.5 638.7L695.4 630.1ZM695.4 630.1L755.5 638.7L842.5 601.4L782.4 592.7ZM782.4 592.7L842.5 601.4L929.5 564L869.4 555.4ZM668.5 676L728.5 684.6L815.5 647.3L755.5 638.7ZM755.5 638.7L815.5 647.3L902.5 610L842.5 601.4ZM842.5 601.4L902.5 610L989.5 572.6L929.5 564ZM815.5 647.3L875.6 655.9L962.6 618.6L902.5 610ZM902.5 610L962.6 618.6L1049.6 581.2L989.5 572.6ZM875.6 655.9L935.7 664.5L1022.7 627.2L962.6 618.6ZM962.6 618.6L1022.7 627.2L1109.7 589.9L1049.6 581.2ZM848.7 701.8L908.8 710.5L995.8 673.1L935.7 664.5ZM935.7 664.5L995.8 673.1L1082.8 635.8L1022.7 627.2ZM1022.7 627.2L1082.8 635.8L1169.8 598.5L1109.7 589.9ZM908.8 710.5L968.9 719.1L1055.9 681.7L995.8 673.1ZM995.8 673.1L1055.9 681.7L1142.9 644.4L1082.8 635.8ZM1082.8 635.8L1142.9 644.4L1229.9 607.1L1169.8 598.5ZM968.9 719.1L1029 727.7L1116 690.3L1055.9 681.7ZM1055.9 681.7L1116 690.3L1203 653L1142.9 644.4ZM1142.9 644.4L1203 653L1290 615.7L1229.9 607.1ZM1029 727.7L1089 736.3L1176 698.9L1116 690.3ZM1116 690.3L1176 698.9L1263 661.6L1203 653ZM1203 653L1263 661.6L1350 624.3L1290 615.7ZM1089 736.3L1149.1 744.9L1236.1 707.6L1176 698.9ZM1176 698.9L1236.1 707.6L1323.1 670.2L1263 661.6ZM1263 661.6L1323.1 670.2L1410.1 632.9L1350 624.3ZM1149.1 744.9L1209.2 753.5L1296.2 716.2L1236.1 707.6ZM1236.1 707.6L1296.2 716.2L1383.2 678.8L1323.1 670.2ZM1323.1 670.2L1383.2 678.8L1470.2 641.5L1410.1 632.9ZM1209.2 753.5L1269.3 762.1L1356.3 724.8L1296.2 716.2ZM1296.2 716.2L1356.3 724.8L1443.3 687.4L1383.2 678.8ZM1383.2 678.8L1443.3 687.4L1530.3 650.1L1470.2 641.5Z" fill="#40c0c0" stroke="#40c0c0" stroke-width="0.6"/>
<path d="M602 641.6L641.7 647.3M689 604.3L728.7 609.9M776 566.9L815.7 572.6M662.1 650.2L701.8 655.9M749.1 612.9L788.8 618.6M836.1 575.5L875.8 581.2M722.2 658.8L761.8 664.5M809.2 621.5L848.8 627.2M896.2 584.2L935.8 589.8M869.3 630.1L908.9 635.8M956.3 592.8L995.9 598.4M929.3 638.7L969 644.4M1016.3 601.4L1056 607.1M902.4 684.6L942.1 690.3M989.4 647.3L1029.1 653M1076.4 610L1116.1 615.7M962.5 693.2L1002.2 698.9M1049.5 655.9L1089.2 661.6M1136.5 618.6L1176.2 624.3M1022.6 701.9L1062.3 707.5M1109.6 664.5L1149.3 670.2M1196.6 627.2L1236.3 632.9M1082.7 710.5L1122.3 716.1M1169.7 673.1L1209.3 678.8M1256.7 635.8L1296.3 641.5M1142.8 719.1L1182.4 724.8M1229.8 681.7L1269.4 687.4M1316.8 644.4L1356.4 650.1M1202.8 727.7L1242.5 733.4M1289.8 690.4L1329.5 696M1376.8 653L1416.5 658.7M1262.9 736.3L1302.6 742M1349.9 699L1389.6 704.6M1436.9 661.6L1476.6 667.3" stroke="#8a8a8a" stroke-opacity="0.6" stroke-width="1" fill="none"/>
<path d="M602 641.6L609.1 641.3L607.9 643.7ZM641.7 647.3L635.8 645.1L634.6 647.5ZM689 604.3L696.1 604L694.9 606.4ZM728.7 609.9L722.8 607.8L721.6 610.2ZM776 566.9L783.1 566.7L781.9 569.1ZM815.7 572.6L809.8 570.5L808.6 572.9ZM662.1 650.2L669.2 649.9L668 652.3ZM701.8 655.9L695.9 653.8L694.7 656.2ZM749.1 612.9L756.2 612.6L755 615ZM788.8 618.6L782.9 616.4L781.7 618.8ZM836.1 575.5L843.2 575.3L842 577.7ZM875.8 581.2L869.9 579.1L868.7 581.5ZM722.2 658.8L729.3 658.5L728.1 660.9ZM761.8 664.5L755.9 662.4L754.7 664.8ZM809.2 621.5L816.3 621.2L815.1 623.6ZM848.8 627.2L842.9 625L841.7 627.4ZM896.2 584.2L903.3 583.9L902.1 586.3ZM935.8 589.8L929.9 587.7L928.7 590.1ZM869.3 630.1L876.4 629.8L875.2 632.2ZM908.9 635.8L903 633.6L901.8 636ZM956.3 592.8L963.4 592.5L962.2 594.9ZM995.9 598.4L990 596.3L988.8 598.7ZM929.3 638.7L936.4 638.4L935.2 640.8ZM969 644.4L963.1 642.3L961.9 644.7ZM1016.3 601.4L1023.4 601.1L1022.2 603.5ZM1056 607.1L1050.1 604.9L1048.9 607.3ZM902.4 684.6L909.5 684.4L908.3 686.8ZM942.1 690.3L936.2 688.2L935 690.6ZM989.4 647.3L996.5 647L995.3 649.4ZM1029.1 653L1023.2 650.9L1022 653.3ZM1076.4 610L1083.5 609.7L1082.3 612.1ZM1116.1 615.7L1110.2 613.5L1109 615.9ZM962.5 693.2L969.6 693L968.4 695.4ZM1002.2 698.9L996.3 696.8L995.1 699.2ZM1049.5 655.9L1056.6 655.6L1055.4 658ZM1089.2 661.6L1083.3 659.5L1082.1 661.9ZM1136.5 618.6L1143.6 618.3L1142.4 620.7ZM1176.2 624.3L1170.3 622.1L1169.1 624.5ZM1022.6 701.9L1029.7 701.6L1028.5 704ZM1062.3 707.5L1056.4 705.4L1055.2 707.8ZM1109.6 664.5L1116.7 664.3L1115.5 666.7ZM1149.3 670.2L1143.4 668.1L1142.2 670.5ZM1196.6 627.2L1203.7 626.9L1202.5 629.3ZM1236.3 632.9L1230.4 630.7L1229.2 633.1ZM1082.7 710.5L1089.8 710.2L1088.6 712.6ZM1122.3 716.1L1116.4 714L1115.2 716.4ZM1169.7 673.1L1176.8 672.9L1175.6 675.3ZM1209.3 678.8L1203.4 676.7L1202.2 679.1ZM1256.7 635.8L1263.8 635.5L1262.6 637.9ZM1296.3 641.5L1290.4 639.4L1289.2 641.8ZM1142.8 719.1L1149.9 718.8L1148.7 721.2ZM1182.4 724.8L1176.5 722.6L1175.3 725ZM1229.8 681.7L1236.9 681.5L1235.7 683.9ZM1269.4 687.4L1263.5 685.3L1262.3 687.7ZM1316.8 644.4L1323.9 644.1L1322.7 646.5ZM1356.4 650.1L1350.5 648L1349.3 650.4ZM1202.8 727.7L1209.9 727.4L1208.7 729.8ZM1242.5 733.4L1236.6 731.2L1235.4 733.6ZM1289.8 690.4L1296.9 690.1L1295.7 692.5ZM1329.5 696L1323.6 693.9L1322.4 696.3ZM1376.8 653L1383.9 652.8L1382.7 655.2ZM1416.5 658.7L1410.6 656.6L1409.4 659ZM1262.9 736.3L1270 736L1268.8 738.4ZM1302.6 742L1296.7 739.8L1295.5 742.2ZM1349.9 699L1357 698.7L1355.8 701.1ZM1389.6 704.6L1383.7 702.5L1382.5 704.9ZM1436.9 661.6L1444 661.4L1442.8 663.8ZM1476.6 667.3L1470.7 665.2L1469.5 667.6Z" fill="#8a8a8a" fill-opacity="0.8"/>
<path d="M635.3 621.5L1356.3 724.8M722.3 584.1L1443.3 687.4M809.3 546.8L1530.3 650.1M548.3 658.8L809.3 546.8M608.4 667.4L869.4 555.4M668.5 676L929.5 564M728.5 684.6L989.5 572.6M788.6 693.2L1049.6 581.2M848.7 701.8L1109.7 589.9M908.8 710.5L1169.8 598.5M968.9 719.1L1229.9 607.1M1029 727.7L1290 615.7M1089 736.3L1350 624.3M1149.1 744.9L1410.1 632.9M1209.2 753.5L1470.2 641.5" stroke="#1c1c1c" stroke-width="0.9" fill="none"/>
<path d="M548.3 658.8L1269.3 762.1M1269.3 762.1L1530.3 650.1M788.6 693.2L875.6 655.9" stroke="#1c1c1c" stroke-width="1.35" fill="none"/>
<path d="M548.3 658.8L548.3 578.1M635.3 621.5L635.3 540.8M722.3 584.1L722.3 503.4M809.3 546.8L809.3 466.1M728.5 684.6L728.5 603.9M815.5 647.3L815.5 566.6M902.5 610L902.5 529.3M989.5 572.6L989.5 491.9M908.8 710.5L908.8 629.8M995.8 673.1L995.8 592.4M1082.8 635.8L1082.8 555.1M1169.8 598.5L1169.8 517.8M1089 736.3L1089 655.6M1176 698.9L1176 618.2M1263 661.6L1263 580.9M1350 624.3L1350 543.6M1269.3 762.1L1269.3 681.4M1356.3 724.8L1356.3 644.1M1443.3 687.4L1443.3 606.7M1530.3 650.1L1530.3 569.4M848.7 701.8L848.7 621.1M935.7 664.5L935.7 583.8M728.5 684.6L848.7 621.1M848.7 701.8L728.5 603.9M728.5 684.6L815.5 566.6M815.5 647.3L728.5 603.9M848.7 701.8L935.7 583.8M935.7 664.5L848.7 621.1" stroke="#1c1c1c" stroke-width="1.45" fill="none"/>
<path d="M548.3 578.1L608.4 586.7L695.4 549.4L635.3 540.8ZM635.3 540.8L695.4 549.4L782.4 512L722.3 503.4ZM722.3 503.4L782.4 512L869.4 474.7L809.3 466.1ZM608.4 586.7L668.5 595.3L755.5 558L695.4 549.4ZM695.4 549.4L755.5 558L842.5 520.7L782.4 512ZM782.4 512L842.5 520.7L929.5 483.3L869.4 474.7ZM668.5 595.3L728.5 603.9L815.5 566.6L755.5 558ZM755.5 558L815.5 566.6L902.5 529.3L842.5 520.7ZM842.5 520.7L902.5 529.3L989.5 491.9L929.5 483.3ZM815.5 566.6L875.6 575.2L962.6 537.9L902.5 529.3ZM902.5 529.3L962.6 537.9L1049.6 500.5L989.5 491.9ZM875.6 575.2L935.7 583.8L1022.7 546.5L962.6 537.9ZM962.6 537.9L1022.7 546.5L1109.7 509.2L1049.6 500.5ZM848.7 621.1L908.8 629.8L995.8 592.4L935.7 583.8ZM935.7 583.8L995.8 592.4L1082.8 555.1L1022.7 546.5ZM1022.7 546.5L1082.8 555.1L1169.8 517.8L1109.7 509.2ZM908.8 629.8L968.9 638.4L1055.9 601L995.8 592.4ZM995.8 592.4L1055.9 601L1142.9 563.7L1082.8 555.1ZM1082.8 555.1L1142.9 563.7L1229.9 526.4L1169.8 517.8ZM968.9 638.4L1029 647L1116 609.6L1055.9 601ZM1055.9 601L1116 609.6L1203 572.3L1142.9 563.7ZM1142.9 563.7L1203 572.3L1290 535L1229.9 526.4ZM1029 647L1089 655.6L1176 618.2L1116 609.6ZM1116 609.6L1176 618.2L1263 580.9L1203 572.3ZM1203 572.3L1263 580.9L1350 543.6L1290 535ZM1089 655.6L1149.1 664.2L1236.1 626.9L1176 618.2ZM1176 618.2L1236.1 626.9L1323.1 589.5L1263 580.9ZM1263 580.9L1323.1 589.5L1410.1 552.2L1350 543.6ZM1149.1 664.2L1209.2 672.8L1296.2 635.5L1236.1 626.9ZM1236.1 626.9L1296.2 635.5L1383.2 598.1L1323.1 589.5ZM1323.1 589.5L1383.2 598.1L1470.2 560.8L1410.1 552.2ZM1209.2 672.8L1269.3 681.4L1356.3 644.1L1296.2 635.5ZM1296.2 635.5L1356.3 644.1L1443.3 606.7L1383.2 598.1ZM1383.2 598.1L1443.3 606.7L1530.3 569.4L1470.2 560.8Z" fill="#40c0c0" stroke="#40c0c0" stroke-width="0.6"/>
<path d="M602 560.9L641.7 566.6M689 523.6L728.7 529.2M776 486.2L815.7 491.9M662.1 569.5L701.8 575.2M749.1 532.2L788.8 537.9M836.1 494.8L875.8 500.5M722.2 578.1L761.8 583.8M809.2 540.8L848.8 546.5M896.2 503.5L935.8 509.1M869.3 549.4L908.9 555.1M956.3 512.1L995.9 517.7M929.3 558L969 563.7M1016.3 520.7L1056 526.4M902.4 603.9L942.1 609.6M989.4 566.6L1029.1 572.3M1076.4 529.3L1116.1 535M962.5 612.5L1002.2 618.2M1049.5 575.2L1089.2 580.9M1136.5 537.9L1176.2 543.6M1022.6 621.2L1062.3 626.8M1109.6 583.8L1149.3 589.5M1196.6 546.5L1236.3 552.2M1082.7 629.8L1122.3 635.4M1169.7 592.4L1209.3 598.1M1256.7 555.1L1296.3 560.8M1142.8 638.4L1182.4 644.1M1229.8 601L1269.4 606.7M1316.8 563.7L1356.4 569.4M1202.8 647L1242.5 652.7M1289.8 609.7L1329.5 615.3M1376.8 572.3L1416.5 578M1262.9 655.6L1302.6 661.3M1349.9 618.3L1389.6 623.9M1436.9 580.9L1476.6 586.6" stroke="#8a8a8a" stroke-opacity="0.6" stroke-width="1" fill="none"/>
<path d="M602 560.9L609.1 560.6L607.9 563ZM641.7 566.6L635.8 564.4L634.6 566.8ZM689 523.6L696.1 523.3L694.9 525.7ZM728.7 529.2L722.8 527.1L721.6 529.5ZM776 486.2L783.1 486L781.9 488.4ZM815.7 491.9L809.8 489.8L808.6 492.2ZM662.1 569.5L669.2 569.2L668 571.6ZM701.8 575.2L695.9 573.1L694.7 575.5ZM749.1 532.2L756.2 531.9L755 534.3ZM788.8 537.9L782.9 535.7L781.7 538.1ZM836.1 494.8L843.2 494.6L842 497ZM875.8 500.5L869.9 498.4L868.7 500.8ZM722.2 578.1L729.3 577.8L728.1 580.2ZM761.8 583.8L755.9 581.7L754.7 584.1ZM809.2 540.8L816.3 540.5L815.1 542.9ZM848.8 546.5L842.9 544.3L841.7 546.7ZM896.2 503.5L903.3 503.2L902.1 505.6ZM935.8 509.1L929.9 507L928.7 509.4ZM869.3 549.4L876.4 549.1L875.2 551.5ZM908.9 555.1L903 552.9L901.8 555.3ZM956.3 512.1L963.4 511.8L962.2 514.2ZM995.9 517.7L990 515.6L988.8 518ZM929.3 558L936.4 557.7L935.2 560.1ZM969 563.7L963.1 561.6L961.9 564ZM1016.3 520.7L1023.4 520.4L1022.2 522.8ZM1056 526.4L1050.1 524.2L1048.9 526.6ZM902.4 603.9L909.5 603.7L908.3 606.1ZM942.1 609.6L936.2 607.5L935 609.9ZM989.4 566.6L996.5 566.3L995.3 568.7ZM1029.1 572.3L1023.2 570.2L1022 572.6ZM1076.4 529.3L1083.5 529L1082.3 531.4ZM1116.1 535L1110.2 532.8L1109 535.2ZM962.5 612.5L969.6 612.3L968.4 614.7ZM1002.2 618.2L996.3 616.1L995.1 618.5ZM1049.5 575.2L1056.6 574.9L1055.4 577.3ZM1089.2 580.9L1083.3 578.8L1082.1 581.2ZM1136.5 537.9L1143.6 537.6L1142.4 540ZM1176.2 543.6L1170.3 541.4L1169.1 543.8ZM1022.6 621.2L1029.7 620.9L1028.5 623.3ZM1062.3 626.8L1056.4 624.7L1055.2 627.1ZM1109.6 583.8L1116.7 583.6L1115.5 586ZM1149.3 589.5L1143.4 587.4L1142.2 589.8ZM1196.6 546.5L1203.7 546.2L1202.5 548.6ZM1236.3 552.2L1230.4 550L1229.2 552.4ZM1082.7 629.8L1089.8 629.5L1088.6 631.9ZM1122.3 635.4L1116.4 633.3L1115.2 635.7ZM1169.7 592.4L1176.8 592.2L1175.6 594.6ZM1209.3 598.1L1203.4 596L1202.2 598.4ZM1256.7 555.1L1263.8 554.8L1262.6 557.2ZM1296.3 560.8L1290.4 558.7L1289.2 561.1ZM1142.8 638.4L1149.9 638.1L1148.7 640.5ZM1182.4 644.1L1176.5 641.9L1175.3 644.3ZM1229.8 601L1236.9 600.8L1235.7 603.2ZM1269.4 606.7L1263.5 604.6L1262.3 607ZM1316.8 563.7L1323.9 563.4L1322.7 565.8ZM1356.4 569.4L1350.5 567.3L1349.3 569.7ZM1202.8 647L1209.9 646.7L1208.7 649.1ZM1242.5 652.7L1236.6 650.5L1235.4 652.9ZM1289.8 609.7L1296.9 609.4L1295.7 611.8ZM1329.5 615.3L1323.6 613.2L1322.4 615.6ZM1376.8 572.3L1383.9 572.1L1382.7 574.5ZM1416.5 578L1410.6 575.9L1409.4 578.3ZM1262.9 655.6L1270 655.3L1268.8 657.7ZM1302.6 661.3L1296.7 659.1L1295.5 661.5ZM1349.9 618.3L1357 618L1355.8 620.4ZM1389.6 623.9L1383.7 621.8L1382.5 624.2ZM1436.9 580.9L1444 580.7L1442.8 583.1ZM1476.6 586.6L1470.7 584.5L1469.5 586.9Z" fill="#8a8a8a" fill-opacity="0.8"/>
<path d="M635.3 540.8L1356.3 644.1M722.3 503.4L1443.3 606.7M809.3 466.1L1530.3 569.4M548.3 578.1L809.3 466.1M608.4 586.7L869.4 474.7M668.5 595.3L929.5 483.3M728.5 603.9L989.5 491.9M788.6 612.5L1049.6 500.5M848.7 621.1L1109.7 509.2M908.8 629.8L1169.8 517.8M968.9 638.4L1229.9 526.4M1029 647L1290 535M1089 655.6L1350 543.6M1149.1 664.2L1410.1 552.2M1209.2 672.8L1470.2 560.8" stroke="#1c1c1c" stroke-width="0.9" fill="none"/>
<path d="M548.3 578.1L1269.3 681.4M1269.3 681.4L1530.3 569.4M788.6 612.5L875.6 575.2" stroke="#1c1c1c" stroke-width="1.35" fill="none"/>
<path d="M548.3 578.1L548.3 497.4M635.3 540.8L635.3 460.1M722.3 503.4L722.3 422.7M809.3 466.1L809.3 385.4M728.5 603.9L728.5 523.2M815.5 566.6L815.5 485.9M902.5 529.3L902.5 448.6M989.5 491.9L989.5 411.2M908.8 629.8L908.8 549M995.8 592.4L995.8 511.7M1082.8 555.1L1082.8 474.4M1169.8 517.8L1169.8 437.1M1089 655.6L1089 574.9M1176 618.2L1176 537.5M1263 580.9L1263 500.2M1350 543.6L1350 462.9M1269.3 681.4L1269.3 600.7M1356.3 644.1L1356.3 563.4M1443.3 606.7L1443.3 526M1530.3 569.4L1530.3 488.7M848.7 621.1L848.7 540.4M935.7 583.8L935.7 503.1M728.5 603.9L848.7 540.4M848.7 621.1L728.5 523.2M728.5 603.9L815.5 485.9M815.5 566.6L728.5 523.2M848.7 621.1L935.7 503.1M935.7 583.8L848.7 540.4" stroke="#1c1c1c" stroke-width="1.45" fill="none"/>
<path d="M548.3 497.4L608.4 506L695.4 468.7L635.3 460.1ZM635.3 460.1L695.4 468.7L782.4 431.3L722.3 422.7ZM722.3 422.7L782.4 431.3L869.4 394L809.3 385.4ZM608.4 506L668.5 514.6L755.5 477.3L695.4 468.7ZM695.4 468.7L755.5 477.3L842.5 440L782.4 431.3ZM782.4 431.3L842.5 440L929.5 402.6L869.4 394ZM668.5 514.6L728.5 523.2L815.5 485.9L755.5 477.3ZM755.5 477.3L815.5 485.9L902.5 448.6L842.5 440ZM842.5 440L902.5 448.6L989.5 411.2L929.5 402.6ZM815.5 485.9L875.6 494.5L962.6 457.2L902.5 448.6ZM902.5 448.6L962.6 457.2L1049.6 419.8L989.5 411.2ZM875.6 494.5L935.7 503.1L1022.7 465.8L962.6 457.2ZM962.6 457.2L1022.7 465.8L1109.7 428.5L1049.6 419.8ZM848.7 540.4L908.8 549L995.8 511.7L935.7 503.1ZM935.7 503.1L995.8 511.7L1082.8 474.4L1022.7 465.8ZM1022.7 465.8L1082.8 474.4L1169.8 437.1L1109.7 428.5ZM908.8 549L968.9 557.7L1055.9 520.3L995.8 511.7ZM995.8 511.7L1055.9 520.3L1142.9 483L1082.8 474.4ZM1082.8 474.4L1142.9 483L1229.9 445.7L1169.8 437.1ZM968.9 557.7L1029 566.3L1116 528.9L1055.9 520.3ZM1055.9 520.3L1116 528.9L1203 491.6L1142.9 483ZM1142.9 483L1203 491.6L1290 454.3L1229.9 445.7ZM1029 566.3L1089 574.9L1176 537.5L1116 528.9ZM1116 528.9L1176 537.5L1263 500.2L1203 491.6ZM1203 491.6L1263 500.2L1350 462.9L1290 454.3ZM1089 574.9L1149.1 583.5L1236.1 546.2L1176 537.5ZM1176 537.5L1236.1 546.2L1323.1 508.8L1263 500.2ZM1263 500.2L1323.1 508.8L1410.1 471.5L1350 462.9ZM1149.1 583.5L1209.2 592.1L1296.2 554.8L1236.1 546.2ZM1236.1 546.2L1296.2 554.8L1383.2 517.4L1323.1 508.8ZM1323.1 508.8L1383.2 517.4L1470.2 480.1L1410.1 471.5ZM1209.2 592.1L1269.3 600.7L1356.3 563.4L1296.2 554.8ZM1296.2 554.8L1356.3 563.4L1443.3 526L1383.2 517.4ZM1383.2 517.4L1443.3 526L1530.3 488.7L1470.2 480.1Z" fill="#40c0c0" stroke="#40c0c0" stroke-width="0.6"/>
<path d="M602 480.2L641.7 485.9M689 442.9L728.7 448.5M776 405.5L815.7 411.2M662.1 488.8L701.8 494.5M749.1 451.5L788.8 457.2M836.1 414.1L875.8 419.8M722.2 497.4L761.8 503.1M809.2 460.1L848.8 465.8M896.2 422.8L935.8 428.4M869.3 468.7L908.9 474.4M956.3 431.4L995.9 437M929.3 477.3L969 483M1016.3 440L1056 445.7M902.4 523.2L942.1 528.9M989.4 485.9L1029.1 491.6M1076.4 448.6L1116.1 454.3M962.5 531.8L1002.2 537.5M1049.5 494.5L1089.2 500.2M1136.5 457.2L1176.2 462.9M1022.6 540.5L1062.3 546.1M1109.6 503.1L1149.3 508.8M1196.6 465.8L1236.3 471.5M1082.7 549.1L1122.3 554.7M1169.7 511.7L1209.3 517.4M1256.7 474.4L1296.3 480.1M1142.8 557.7L1182.4 563.4M1229.8 520.3L1269.4 526M1316.8 483L1356.4 488.7M1202.8 566.3L1242.5 572M1289.8 529L1329.5 534.6M1376.8 491.6L1416.5 497.3M1262.9 574.9L1302.6 580.6M1349.9 537.6L1389.6 543.2M1436.9 500.2L1476.6 505.9" stroke="#8a8a8a" stroke-opacity="0.6" stroke-width="1" fill="none"/>
<path d="M602 480.2L609.1 479.9L607.9 482.3ZM641.7 485.9L635.8 483.7L634.6 486.1ZM689 442.9L696.1 442.6L694.9 445ZM728.7 448.5L722.8 446.4L721.6 448.8ZM776 405.5L783.1 405.3L781.9 407.7ZM815.7 411.2L809.8 409.1L808.6 411.5ZM662.1 488.8L669.2 488.5L668 490.9ZM701.8 494.5L695.9 492.4L694.7 494.8ZM749.1 451.5L756.2 451.2L755 453.6ZM788.8 457.2L782.9 455L781.7 457.4ZM836.1 414.1L843.2 413.9L842 416.3ZM875.8 419.8L869.9 417.7L868.7 420.1ZM722.2 497.4L729.3 497.1L728.1 499.5ZM761.8 503.1L755.9 501L754.7 503.4ZM809.2 460.1L816.3 459.8L815.1 462.2ZM848.8 465.8L842.9 463.6L841.7 466ZM896.2 422.8L903.3 422.5L902.1 424.9ZM935.8 428.4L929.9 426.3L928.7 428.7ZM869.3 468.7L876.4 468.4L875.2 470.8ZM908.9 474.4L903 472.2L901.8 474.6ZM956.3 431.4L963.4 431.1L962.2 433.5ZM995.9 437L990 434.9L988.8 437.3ZM929.3 477.3L936.4 477L935.2 479.4ZM969 483L963.1 480.9L961.9 483.3ZM1016.3 440L1023.4 439.7L1022.2 442.1ZM1056 445.7L1050.1 443.5L1048.9 445.9ZM902.4 523.2L909.5 523L908.3 525.4ZM942.1 528.9L936.2 526.8L935 529.2ZM989.4 485.9L996.5 485.6L995.3 488ZM1029.1 491.6L1023.2 489.5L1022 491.9ZM1076.4 448.6L1083.5 448.3L1082.3 450.7ZM1116.1 454.3L1110.2 452.1L1109 454.5ZM962.5 531.8L969.6 531.6L968.4 534ZM1002.2 537.5L996.3 535.4L995.1 537.8ZM1049.5 494.5L1056.6 494.2L1055.4 496.6ZM1089.2 500.2L1083.3 498.1L1082.1 500.5ZM1136.5 457.2L1143.6 456.9L1142.4 459.3ZM1176.2 462.9L1170.3 460.7L1169.1 463.1ZM1022.6 540.5L1029.7 540.2L1028.5 542.6ZM1062.3 546.1L1056.4 544L1055.2 546.4ZM1109.6 503.1L1116.7 502.9L1115.5 505.3ZM1149.3 508.8L1143.4 506.7L1142.2 509.1ZM1196.6 465.8L1203.7 465.5L1202.5 467.9ZM1236.3 471.5L1230.4 469.3L1229.2 471.7ZM1082.7 549.1L1089.8 548.8L1088.6 551.2ZM1122.3 554.7L1116.4 552.6L1115.2 555ZM1169.7 511.7L1176.8 511.5L1175.6 513.9ZM1209.3 517.4L1203.4 515.3L1202.2 517.7ZM1256.7 474.4L1263.8 474.1L1262.6 476.5ZM1296.3 480.1L1290.4 478L1289.2 480.4ZM1142.8 557.7L1149.9 557.4L1148.7 559.8ZM1182.4 563.4L1176.5 561.2L1175.3 563.6ZM1229.8 520.3L1236.9 520.1L1235.7 522.5ZM1269.4 526L1263.5 523.9L1262.3 526.3ZM1316.8 483L1323.9 482.7L1322.7 485.1ZM1356.4 488.7L1350.5 486.6L1349.3 489ZM1202.8 566.3L1209.9 566L1208.7 568.4ZM1242.5 572L1236.6 569.8L1235.4 572.2ZM1289.8 529L1296.9 528.7L1295.7 531.1ZM1329.5 534.6L1323.6 532.5L1322.4 534.9ZM1376.8 491.6L1383.9 491.4L1382.7 493.8ZM1416.5 497.3L1410.6 495.2L1409.4 497.6ZM1262.9 574.9L1270 574.6L1268.8 577ZM1302.6 580.6L1296.7 578.4L1295.5 580.8ZM1349.9 537.6L1357 537.3L1355.8 539.7ZM1389.6 543.2L1383.7 541.1L1382.5 543.5ZM1436.9 500.2L1444 500L1442.8 502.4ZM1476.6 505.9L1470.7 503.8L1469.5 506.2Z" fill="#8a8a8a" fill-opacity="0.8"/>
<path d="M635.3 460.1L1356.3 563.4M722.3 422.7L1443.3 526M809.3 385.4L1530.3 488.7M548.3 497.4L809.3 385.4M608.4 506L869.4 394M668.5 514.6L929.5 402.6M728.5 523.2L989.5 411.2M788.6 531.8L1049.6 419.8M848.7 540.4L1109.7 428.5M908.8 549L1169.8 437.1M968.9 557.7L1229.9 445.7M1029 566.3L1290 454.3M1089 574.9L1350 462.9M1149.1 583.5L1410.1 471.5M1209.2 592.1L1470.2 480.1" stroke="#1c1c1c" stroke-width="0.9" fill="none"/>
<path d="M548.3 497.4L1269.3 600.7M1269.3 600.7L1530.3 488.7M788.6 531.8L875.6 494.5" stroke="#1c1c1c" stroke-width="1.35" fill="none"/>
<path d="M548.3 497.4L548.3 416.7M635.3 460.1L635.3 379.4M722.3 422.7L722.3 342M809.3 385.4L809.3 304.7M728.5 523.2L728.5 442.5M815.5 485.9L815.5 405.2M902.5 448.6L902.5 367.9M989.5 411.2L989.5 330.5M908.8 549L908.8 468.3M995.8 511.7L995.8 431M1082.8 474.4L1082.8 393.7M1169.8 437.1L1169.8 356.4M1089 574.9L1089 494.2M1176 537.5L1176 456.8M1263 500.2L1263 419.5M1350 462.9L1350 382.2M1269.3 600.7L1269.3 520M1356.3 563.4L1356.3 482.7M1443.3 526L1443.3 445.3M1530.3 488.7L1530.3 408M848.7 540.4L848.7 459.7M935.7 503.1L935.7 422.4M728.5 523.2L848.7 459.7M848.7 540.4L728.5 442.5M728.5 523.2L815.5 405.2M815.5 485.9L728.5 442.5M848.7 540.4L935.7 422.4M935.7 503.1L848.7 459.7" stroke="#1c1c1c" stroke-width="1.45" fill="none"/>
<path d="M548.3 416.7L608.4 425.3L695.4 388L635.3 379.4ZM635.3 379.4L695.4 388L782.4 350.6L722.3 342ZM722.3 342L782.4 350.6L869.4 313.3L809.3 304.7ZM608.4 425.3L668.5 433.9L755.5 396.6L695.4 388ZM695.4 388L755.5 396.6L842.5 359.3L782.4 350.6ZM782.4 350.6L842.5 359.3L929.5 321.9L869.4 313.3ZM668.5 433.9L728.5 442.5L815.5 405.2L755.5 396.6ZM755.5 396.6L815.5 405.2L902.5 367.9L842.5 359.3ZM842.5 359.3L902.5 367.9L989.5 330.5L929.5 321.9ZM815.5 405.2L875.6 413.8L962.6 376.5L902.5 367.9ZM902.5 367.9L962.6 376.5L1049.6 339.1L989.5 330.5ZM875.6 413.8L935.7 422.4L1022.7 385.1L962.6 376.5ZM962.6 376.5L1022.7 385.1L1109.7 347.8L1049.6 339.1ZM848.7 459.7L908.8 468.3L995.8 431L935.7 422.4ZM935.7 422.4L995.8 431L1082.8 393.7L1022.7 385.1ZM1022.7 385.1L1082.8 393.7L1169.8 356.4L1109.7 347.8ZM908.8 468.3L968.9 477L1055.9 439.6L995.8 431ZM995.8 431L1055.9 439.6L1142.9 402.3L1082.8 393.7ZM1082.8 393.7L1142.9 402.3L1229.9 365L1169.8 356.4ZM968.9 477L1029 485.6L1116 448.2L1055.9 439.6ZM1055.9 439.6L1116 448.2L1203 410.9L1142.9 402.3ZM1142.9 402.3L1203 410.9L1290 373.6L1229.9 365ZM1029 485.6L1089 494.2L1176 456.8L1116 448.2ZM1116 448.2L1176 456.8L1263 419.5L1203 410.9ZM1203 410.9L1263 419.5L1350 382.2L1290 373.6ZM1089 494.2L1149.1 502.8L1236.1 465.5L1176 456.8ZM1176 456.8L1236.1 465.5L1323.1 428.1L1263 419.5ZM1263 419.5L1323.1 428.1L1410.1 390.8L1350 382.2ZM1149.1 502.8L1209.2 511.4L1296.2 474.1L1236.1 465.5ZM1236.1 465.5L1296.2 474.1L1383.2 436.7L1323.1 428.1ZM1323.1 428.1L1383.2 436.7L1470.2 399.4L1410.1 390.8ZM1209.2 511.4L1269.3 520L1356.3 482.7L1296.2 474.1ZM1296.2 474.1L1356.3 482.7L1443.3 445.3L1383.2 436.7ZM1383.2 436.7L1443.3 445.3L1530.3 408L1470.2 399.4Z" fill="#40c0c0" stroke="#40c0c0" stroke-width="0.6"/>
<path d="M602 399.5L641.7 405.2M689 362.2L728.7 367.8M776 324.8L815.7 330.5M662.1 408.1L701.8 413.8M749.1 370.8L788.8 376.5M836.1 333.4L875.8 339.1M722.2 416.7L761.8 422.4M809.2 379.4L848.8 385.1M896.2 342.1L935.8 347.7M869.3 388L908.9 393.7M956.3 350.7L995.9 356.3M929.3 396.6L969 402.3M1016.3 359.3L1056 365M902.4 442.5L942.1 448.2M989.4 405.2L1029.1 410.9M1076.4 367.9L1116.1 373.6M962.5 451.1L1002.2 456.8M1049.5 413.8L1089.2 419.5M1136.5 376.5L1176.2 382.2M1022.6 459.8L1062.3 465.4M1109.6 422.4L1149.3 428.1M1196.6 385.1L1236.3 390.8M1082.7 468.4L1122.3 474M1169.7 431L1209.3 436.7M1256.7 393.7L1296.3 399.4M1142.8 477L1182.4 482.7M1229.8 439.6L1269.4 445.3M1316.8 402.3L1356.4 408M1202.8 485.6L1242.5 491.3M1289.8 448.3L1329.5 453.9M1376.8 410.9L1416.5 416.6M1262.9 494.2L1302.6 499.9M1349.9 456.9L1389.6 462.5M1436.9 419.5L1476.6 425.2" stroke="#8a8a8a" stroke-opacity="0.6" stroke-width="1" fill="none"/>
<path d="M602 399.5L609.1 399.2L607.9 401.6ZM641.7 405.2L635.8 403L634.6 405.4ZM689 362.2L696.1 361.9L694.9 364.3ZM728.7 367.8L722.8 365.7L721.6 368.1ZM776 324.8L783.1 324.6L781.9 327ZM815.7 330.5L809.8 328.4L808.6 330.8ZM662.1 408.1L669.2 407.8L668 410.2ZM701.8 413.8L695.9 411.7L694.7 414.1ZM749.1 370.8L756.2 370.5L755 372.9ZM788.8 376.5L782.9 374.3L781.7 376.7ZM836.1 333.4L843.2 333.2L842 335.6ZM875.8 339.1L869.9 337L868.7 339.4ZM722.2 416.7L729.3 416.4L728.1 418.8ZM761.8 422.4L755.9 420.3L754.7 422.7ZM809.2 379.4L816.3 379.1L815.1 381.5ZM848.8 385.1L842.9 382.9L841.7 385.3ZM896.2 342.1L903.3 341.8L902.1 344.2ZM935.8 347.7L929.9 345.6L928.7 348ZM869.3 388L876.4 387.7L875.2 390.1ZM908.9 393.7L903 391.5L901.8 393.9ZM956.3 350.7L963.4 350.4L962.2 352.8ZM995.9 356.3L990 354.2L988.8 356.6ZM929.3 396.6L936.4 396.3L935.2 398.7ZM969 402.3L963.1 400.2L961.9 402.6ZM1016.3 359.3L1023.4 359L1022.2 361.4ZM1056 365L1050.1 362.8L1048.9 365.2ZM902.4 442.5L909.5 442.3L908.3 444.7ZM942.1 448.2L936.2 446.1L935 448.5ZM989.4 405.2L996.5 404.9L995.3 407.3ZM1029.1 410.9L1023.2 408.8L1022 411.2ZM1076.4 367.9L1083.5 367.6L1082.3 370ZM1116.1 373.6L1110.2 371.4L1109 373.8ZM962.5 451.1L969.6 450.9L968.4 453.3ZM1002.2 456.8L996.3 454.7L995.1 457.1ZM1049.5 413.8L1056.6 413.5L1055.4 415.9ZM1089.2 419.5L1083.3 417.4L1082.1 419.8ZM1136.5 376.5L1143.6 376.2L1142.4 378.6ZM1176.2 382.2L1170.3 380L1169.1 382.4ZM1022.6 459.8L1029.7 459.5L1028.5 461.9ZM1062.3 465.4L1056.4 463.3L1055.2 465.7ZM1109.6 422.4L1116.7 422.2L1115.5 424.6ZM1149.3 428.1L1143.4 426L1142.2 428.4ZM1196.6 385.1L1203.7 384.8L1202.5 387.2ZM1236.3 390.8L1230.4 388.6L1229.2 391ZM1082.7 468.4L1089.8 468.1L1088.6 470.5ZM1122.3 474L1116.4 471.9L1115.2 474.3ZM1169.7 431L1176.8 430.8L1175.6 433.2ZM1209.3 436.7L1203.4 434.6L1202.2 437ZM1256.7 393.7L1263.8 393.4L1262.6 395.8ZM1296.3 399.4L1290.4 397.3L1289.2 399.7ZM1142.8 477L1149.9 476.7L1148.7 479.1ZM1182.4 482.7L1176.5 480.5L1175.3 482.9ZM1229.8 439.6L1236.9 439.4L1235.7 441.8ZM1269.4 445.3L1263.5 443.2L1262.3 445.6ZM1316.8 402.3L1323.9 402L1322.7 404.4ZM1356.4 408L1350.5 405.9L1349.3 408.3ZM1202.8 485.6L1209.9 485.3L1208.7 487.7ZM1242.5 491.3L1236.6 489.1L1235.4 491.5ZM1289.8 448.3L1296.9 448L1295.7 450.4ZM1329.5 453.9L1323.6 451.8L1322.4 454.2ZM1376.8 410.9L1383.9 410.7L1382.7 413.1ZM1416.5 416.6L1410.6 414.5L1409.4 416.9ZM1262.9 494.2L1270 493.9L1268.8 496.3ZM1302.6 499.9L1296.7 497.7L1295.5 500.1ZM1349.9 456.9L1357 456.6L1355.8 459ZM1389.6 462.5L1383.7 460.4L1382.5 462.8ZM1436.9 419.5L1444 419.3L1442.8 421.7ZM1476.6 425.2L1470.7 423.1L1469.5 425.5Z" fill="#8a8a8a" fill-opacity="0.8"/>
<path d="M635.3 379.4L1356.3 482.7M722.3 342L1443.3 445.3M809.3 304.7L1530.3 408M548.3 416.7L809.3 304.7M608.4 425.3L869.4 313.3M668.5 433.9L929.5 321.9M728.5 442.5L989.5 330.5M788.6 451.1L1049.6 339.1M848.7 459.7L1109.7 347.8M908.8 468.3L1169.8 356.4M968.9 477L1229.9 365M1029 485.6L1290 373.6M1089 494.2L1350 382.2M1149.1 502.8L1410.1 390.8M1209.2 511.4L1470.2 399.4" stroke="#1c1c1c" stroke-width="0.9" fill="none"/>
<path d="M548.3 416.7L1269.3 520M1269.3 520L1530.3 408M788.6 451.1L875.6 413.8" stroke="#1c1c1c" stroke-width="1.35" fill="none"/>
<path d="M548.3 416.7L548.3 336M635.3 379.4L635.3 298.7M722.3 342L722.3 261.3M809.3 304.7L809.3 224M728.5 442.5L728.5 361.8M815.5 405.2L815.5 324.5M902.5 367.9L902.5 287.2M989.5 330.5L989.5 249.8M908.8 468.3L908.8 387.6M995.8 431L995.8 350.3M1082.8 393.7L1082.8 313M1169.8 356.4L1169.8 275.7M1089 494.2L1089 413.5M1176 456.8L1176 376.1M1263 419.5L1263 338.8M1350 382.2L1350 301.5M1269.3 520L1269.3 439.3M1356.3 482.7L1356.3 402M1443.3 445.3L1443.3 364.6M1530.3 408L1530.3 327.3M848.7 459.7L848.7 379M935.7 422.4L935.7 341.7M728.5 442.5L848.7 379M848.7 459.7L728.5 361.8M728.5 442.5L815.5 324.5M815.5 405.2L728.5 361.8M848.7 459.7L935.7 341.7M935.7 422.4L848.7 379" stroke="#1c1c1c" stroke-width="1.45" fill="none"/>
<path d="M548.3 336L608.4 344.6L695.4 307.3L635.3 298.7ZM635.3 298.7L695.4 307.3L782.4 269.9L722.3 261.3ZM722.3 261.3L782.4 269.9L869.4 232.6L809.3 224ZM608.4 344.6L668.5 353.2L755.5 315.9L695.4 307.3ZM695.4 307.3L755.5 315.9L842.5 278.6L782.4 269.9ZM782.4 269.9L842.5 278.6L929.5 241.2L869.4 232.6ZM668.5 353.2L728.5 361.8L815.5 324.5L755.5 315.9ZM755.5 315.9L815.5 324.5L902.5 287.2L842.5 278.6ZM842.5 278.6L902.5 287.2L989.5 249.8L929.5 241.2ZM815.5 324.5L875.6 333.1L962.6 295.8L902.5 287.2ZM902.5 287.2L962.6 295.8L1049.6 258.4L989.5 249.8ZM875.6 333.1L935.7 341.7L1022.7 304.4L962.6 295.8ZM962.6 295.8L1022.7 304.4L1109.7 267.1L1049.6 258.4ZM848.7 379L908.8 387.6L995.8 350.3L935.7 341.7ZM935.7 341.7L995.8 350.3L1082.8 313L1022.7 304.4ZM1022.7 304.4L1082.8 313L1169.8 275.7L1109.7 267.1ZM908.8 387.6L968.9 396.3L1055.9 358.9L995.8 350.3ZM995.8 350.3L1055.9 358.9L1142.9 321.6L1082.8 313ZM1082.8 313L1142.9 321.6L1229.9 284.3L1169.8 275.7ZM968.9 396.3L1029 404.9L1116 367.5L1055.9 358.9ZM1055.9 358.9L1116 367.5L1203 330.2L1142.9 321.6ZM1142.9 321.6L1203 330.2L1290 292.9L1229.9 284.3ZM1029 404.9L1089 413.5L1176 376.1L1116 367.5ZM1116 367.5L1176 376.1L1263 338.8L1203 330.2ZM1203 330.2L1263 338.8L1350 301.5L1290 292.9ZM1089 413.5L1149.1 422.1L1236.1 384.8L1176 376.1ZM1176 376.1L1236.1 384.8L1323.1 347.4L1263 338.8ZM1263 338.8L1323.1 347.4L1410.1 310.1L1350 301.5ZM1149.1 422.1L1209.2 430.7L1296.2 393.4L1236.1 384.8ZM1236.1 384.8L1296.2 393.4L1383.2 356L1323.1 347.4ZM1323.1 347.4L1383.2 356L1470.2 318.7L1410.1 310.1ZM1209.2 430.7L1269.3 439.3L1356.3 402L1296.2 393.4ZM1296.2 393.4L1356.3 402L1443.3 364.6L1383.2 356ZM1383.2 356L1443.3 364.6L1530.3 327.3L1470.2 318.7Z" fill="#40c040" stroke="#40c040" stroke-width="0.6"/>
<path d="M602 318.8L641.7 324.5M689 281.5L728.7 287.1M776 244.1L815.7 249.8M662.1 327.4L701.8 333.1M749.1 290.1L788.8 295.8M836.1 252.7L875.8 258.4M722.2 336L761.8 341.7M809.2 298.7L848.8 304.4M896.2 261.4L935.8 267M869.3 307.3L908.9 313M956.3 270L995.9 275.6M929.3 315.9L969 321.6M1016.3 278.6L1056 284.3M902.4 361.8L942.1 367.5M989.4 324.5L1029.1 330.2M1076.4 287.2L1116.1 292.9M962.5 370.4L1002.2 376.1M1049.5 333.1L1089.2 338.8M1136.5 295.8L1176.2 301.5M1022.6 379.1L1062.3 384.7M1109.6 341.7L1149.3 347.4M1196.6 304.4L1236.3 310.1M1082.7 387.7L1122.3 393.3M1169.7 350.3L1209.3 356M1256.7 313L1296.3 318.7M1142.8 396.3L1182.4 402M1229.8 358.9L1269.4 364.6M1316.8 321.6L1356.4 327.3M1202.8 404.9L1242.5 410.6M1289.8 367.6L1329.5 373.2M1376.8 330.2L1416.5 335.9M1262.9 413.5L1302.6 419.2M1349.9 376.2L1389.6 381.8M1436.9 338.8L1476.6 344.5" stroke="#8a8a8a" stroke-opacity="0.6" stroke-width="1" fill="none"/>
<path d="M602 318.8L609.1 318.5L607.9 320.9ZM641.7 324.5L635.8 322.3L634.6 324.7ZM689 281.5L696.1 281.2L694.9 283.6ZM728.7 287.1L722.8 285L721.6 287.4ZM776 244.1L783.1 243.9L781.9 246.3ZM815.7 249.8L809.8 247.7L808.6 250.1ZM662.1 327.4L669.2 327.1L668 329.5ZM701.8 333.1L695.9 331L694.7 333.4ZM749.1 290.1L756.2 289.8L755 292.2ZM788.8 295.8L782.9 293.6L781.7 296ZM836.1 252.7L843.2 252.5L842 254.9ZM875.8 258.4L869.9 256.3L868.7 258.7ZM722.2 336L729.3 335.7L728.1 338.1ZM761.8 341.7L755.9 339.6L754.7 342ZM809.2 298.7L816.3 298.4L815.1 300.8ZM848.8 304.4L842.9 302.2L841.7 304.6ZM896.2 261.4L903.3 261.1L902.1 263.5ZM935.8 267L929.9 264.9L928.7 267.3ZM869.3 307.3L876.4 307L875.2 309.4ZM908.9 313L903 310.8L901.8 313.2ZM956.3 270L963.4 269.7L962.2 272.1ZM995.9 275.6L990 273.5L988.8 275.9ZM929.3 315.9L936.4 315.6L935.2 318ZM969 321.6L963.1 319.5L961.9 321.9ZM1016.3 278.6L1023.4 278.3L1022.2 280.7ZM1056 284.3L1050.1 282.1L1048.9 284.5ZM902.4 361.8L909.5 361.6L908.3 364ZM942.1 367.5L936.2 365.4L935 367.8ZM989.4 324.5L996.5 324.2L995.3 326.6ZM1029.1 330.2L1023.2 328.1L1022 330.5ZM1076.4 287.2L1083.5 286.9L1082.3 289.3ZM1116.1 292.9L1110.2 290.7L1109 293.1ZM962.5 370.4L969.6 370.2L968.4 372.6ZM1002.2 376.1L996.3 374L995.1 376.4ZM1049.5 333.1L1056.6 332.8L1055.4 335.2ZM1089.2 338.8L1083.3 336.7L1082.1 339.1ZM1136.5 295.8L1143.6 295.5L1142.4 297.9ZM1176.2 301.5L1170.3 299.3L1169.1 301.7ZM1022.6 379.1L1029.7 378.8L1028.5 381.2ZM1062.3 384.7L1056.4 382.6L1055.2 385ZM1109.6 341.7L1116.7 341.5L1115.5 343.9ZM1149.3 347.4L1143.4 345.3L1142.2 347.7ZM1196.6 304.4L1203.7 304.1L1202.5 306.5ZM1236.3 310.1L1230.4 307.9L1229.2 310.3ZM1082.7 387.7L1089.8 387.4L1088.6 389.8ZM1122.3 393.3L1116.4 391.2L1115.2 393.6ZM1169.7 350.3L1176.8 350.1L1175.6 352.5ZM1209.3 356L1203.4 353.9L1202.2 356.3ZM1256.7 313L1263.8 312.7L1262.6 315.1ZM1296.3 318.7L1290.4 316.6L1289.2 319ZM1142.8 396.3L1149.9 396L1148.7 398.4ZM1182.4 402L1176.5 399.8L1175.3 402.2ZM1229.8 358.9L1236.9 358.7L1235.7 361.1ZM1269.4 364.6L1263.5 362.5L1262.3 364.9ZM1316.8 321.6L1323.9 321.3L1322.7 323.7ZM1356.4 327.3L1350.5 325.2L1349.3 327.6ZM1202.8 404.9L1209.9 404.6L1208.7 407ZM1242.5 410.6L1236.6 408.4L1235.4 410.8ZM1289.8 367.6L1296.9 367.3L1295.7 369.7ZM1329.5 373.2L1323.6 371.1L1322.4 373.5ZM1376.8 330.2L1383.9 330L1382.7 332.4ZM1416.5 335.9L1410.6 333.8L1409.4 336.2ZM1262.9 413.5L1270 413.2L1268.8 415.6ZM1302.6 419.2L1296.7 417L1295.5 419.4ZM1349.9 376.2L1357 375.9L1355.8 378.3ZM1389.6 381.8L1383.7 379.7L1382.5 382.1ZM1436.9 338.8L1444 338.6L1442.8 341ZM1476.6 344.5L1470.7 342.4L1469.5 344.8Z" fill="#8a8a8a" fill-opacity="0.8"/>
<path d="M635.3 298.7L1356.3 402M722.3 261.3L1443.3 364.6M809.3 224L1530.3 327.3M548.3 336L809.3 224M608.4 344.6L869.4 232.6M668.5 353.2L929.5 241.2M728.5 361.8L989.5 249.8M788.6 370.4L1049.6 258.4M848.7 379L1109.7 267.1M908.8 387.6L1169.8 275.7M968.9 396.3L1229.9 284.3M1029 404.9L1290 292.9M1089 413.5L1350 301.5M1149.1 422.1L1410.1 310.1M1209.2 430.7L1470.2 318.7" stroke="#1c1c1c" stroke-width="0.9" fill="none"/>
<path d="M548.3 336L1269.3 439.3M1269.3 439.3L1530.3 327.3M788.6 370.4L875.6 333.1" stroke="#1c1c1c" stroke-width="1.35" fill="none"/>
<circle cx="1169.8" cy="758.2" r="3.2" fill="#00ffff"/>
<circle cx="430.7" cy="739.3" r="8.6" fill="#000080"/>
<text x="430.3" y="743.3" class="gl" style="font-size:11.5px;letter-spacing:-0.6px">L1</text>
<path d="M430.7 739.3L469.8 744.5" stroke="#ff0000" stroke-width="1.5"/>
<circle cx="430.7" cy="658.6" r="8.6" fill="#000080"/>
<text x="430.3" y="662.6" class="gl" style="font-size:11.5px;letter-spacing:-0.6px">L2</text>
<path d="M430.7 658.6L469.8 663.8" stroke="#ff0000" stroke-width="1.5"/>
<circle cx="430.7" cy="577.9" r="8.6" fill="#000080"/>
<text x="430.3" y="581.9" class="gl" style="font-size:11.5px;letter-spacing:-0.6px">L3</text>
<path d="M430.7 577.9L469.8 583.1" stroke="#ff0000" stroke-width="1.5"/>
<circle cx="430.7" cy="497.2" r="8.6" fill="#000080"/>
<text x="430.3" y="501.2" class="gl" style="font-size:11.5px;letter-spacing:-0.6px">L4</text>
<path d="M430.7 497.2L469.8 502.4" stroke="#ff0000" stroke-width="1.5"/>
<circle cx="430.7" cy="416.4" r="8.6" fill="#000080"/>
<text x="430.3" y="420.4" class="gl" style="font-size:11.5px;letter-spacing:-0.6px">L5</text>
<path d="M430.7 416.4L469.8 421.6" stroke="#ff0000" stroke-width="1.5"/>
<circle cx="430.7" cy="335.6" r="8.6" fill="#000080"/>
<text x="430.3" y="339.6" class="gl" style="font-size:11.5px;letter-spacing:-0.6px">L6</text>
<path d="M430.7 335.6L469.8 340.8" stroke="#ff0000" stroke-width="1.5"/>
<circle cx="430.7" cy="255.3" r="8.6" fill="#000080"/>
<text x="430.3" y="259.3" class="gl" style="font-size:11.5px;letter-spacing:-0.6px">L7</text>
<path d="M430.7 255.3L469.8 260.5" stroke="#ff0000" stroke-width="1.5"/>
<path d="M15.9 172L4 183.6H7V196.8H14.8V190.8H17.3V196.8H25V183.6H28Z" fill="#acacac"/>
<path d="M36.2 219.1L89.3 226.4V285.5L36.2 278.2Z" fill="#b0b0b0" stroke="#999" stroke-width="1.3" stroke-linejoin="round"/>
<path d="M89.3 226.4L119.5 213.7V272.8L89.3 285.5Z" fill="#afafaf" stroke="#999" stroke-width="1.3" stroke-linejoin="round"/>
<path d="M36.2 219.1L67 206.5L119.5 213.7L89.3 226.4Z" fill="#b0b0b0" stroke="#999" stroke-width="1.3" stroke-linejoin="round"/>
<text transform="matrix(1 0.1375 0 1 62 258.2)" style="font-family:'Liberation Sans',sans-serif;font-size:15.5px;text-anchor:middle;fill:#111">Front</text>
<text transform="matrix(0.56 -0.235 0 1 104 256)" style="font-family:'Liberation Sans',sans-serif;font-size:15.5px;text-anchor:middle;fill:#111">Right</text>
<text transform="matrix(0.95 0.13 -0.5 0.21 73.5 218.5)" style="font-family:'Liberation Sans',sans-serif;font-size:15.5px;font-weight:bold;text-anchor:middle;fill:#000">Top</text>
<path d="M1846.9 1064.6V1017" stroke="#1f8c1f" stroke-width="2"/><path d="M1846.9 1016L1844.6 1024H1849.2Z" fill="#1f8c1f"/>
<path d="M1846.9 1064.6L1872 1054.8" stroke="#0000ff" stroke-width="1.6"/><path d="M1872.6 1054.4L1866.3 1054.9L1867.6 1058.2Z" fill="#0000ff"/>
<path d="M1846.9 1064.6L1889 1071" stroke="#ff0000" stroke-width="1.6"/><path d="M1890.6 1071.2L1883.4 1068.2L1882.9 1071.8Z" fill="#b00000"/>
<circle cx="1846.9" cy="1049.4" r="3" fill="#222"/>
<text x="1850.8" y="1030" class="ax">Y</text><text x="1850.2" y="1059.5" class="ax">N</text><text x="1875.6" y="1066.8" class="ax">Z</text><text x="1893.6" y="1083.8" class="ax">X</text>
</svg>
<div class="b" style="left:11px;top:1064px;width:680px;height:62.5px;background:#a4a4a4"></div>
<div class="b" style="left:12px;top:1065px;width:99px;height:19px;background:#ffffff"></div>
<div class="b" style="left:112px;top:1065px;width:99px;height:19px;background:#ffffff"></div>
<div class="b" style="left:212px;top:1065px;width:159px;height:19px;background:#ffffff"></div>
<div class="b" style="left:372px;top:1065px;width:158px;height:19px;background:#ffffff"></div>
<div class="b" style="left:531px;top:1065px;width:159px;height:19px;background:#ffffff"></div>
<div class="b" style="left:12px;top:1085px;width:99px;height:19px;background:#40c0c0"></div>
<div class="b" style="left:112px;top:1085px;width:99px;height:19px;background:#40c0c0"></div>
<div class="b" style="left:212px;top:1085px;width:159px;height:19px;background:#40c0c0"></div>
<div class="b" style="left:372px;top:1085px;width:158px;height:19px;background:#40c0c0"></div>
<div class="b" style="left:531px;top:1085px;width:159px;height:19px;background:#40c0c0"></div>
<div class="b" style="left:12px;top:1105px;width:99px;height:19px;background:#40c040"></div>
<div class="b" style="left:112px;top:1105px;width:99px;height:19px;background:#40c040"></div>
<div class="b" style="left:212px;top:1105px;width:159px;height:19px;background:#40c040"></div>
<div class="b" style="left:372px;top:1105px;width:158px;height:19px;background:#40c040"></div>
<div class="b" style="left:531px;top:1105px;width:159px;height:19px;background:#40c040"></div>
<span class="t" style="left:14.30px;top:1065.2px;font-size:11px;color:#000;transform:scaleX(0.8955);transform-origin:0.00px 0;">Slab</span>
<span class="t" style="left:114.20px;top:1065.2px;font-size:11px;color:#000;transform:scaleX(0.9116);transform-origin:0.00px 0;">Live L</span>
<span class="t" style="left:214.30px;top:1065.2px;font-size:11px;color:#000;letter-spacing:-0.190px;">Slab Weight</span>
<span class="t" style="left:374.40px;top:1065.2px;font-size:11px;color:#000;letter-spacing:-0.055px;">Construction</span>
<span class="t" style="left:533.20px;top:1065.2px;font-size:11px;color:#000;letter-spacing:-0.013px;">Partition</span>
<span class="t" style="left:15.50px;top:1085.2px;font-size:11px;color:#000;transform:scaleX(0.9239);transform-origin:0.00px 0;white-space:pre;">160</span>
<span class="t" style="left:115.00px;top:1085.2px;font-size:11px;color:#000;letter-spacing:0.000px;white-space:pre;">5.000</span>
<span class="t" style="left:215.00px;top:1085.2px;font-size:11px;color:#000;letter-spacing:0.000px;white-space:pre;">3.443  A1</span>
<span class="t" style="left:374.50px;top:1085.2px;font-size:11px;color:#000;letter-spacing:-0.100px;white-space:pre;">0.750  G1</span>
<span class="t" style="left:534.50px;top:1085.2px;font-size:11px;color:#000;letter-spacing:-0.175px;white-space:pre;">1.000  L1</span>
<span class="t" style="left:15.50px;top:1105.2px;font-size:11px;color:#000;transform:scaleX(0.9239);transform-origin:0.00px 0;white-space:pre;">160</span>
<span class="t" style="left:115.00px;top:1105.2px;font-size:11px;color:#000;letter-spacing:0.000px;white-space:pre;">3.000</span>
<span class="t" style="left:215.00px;top:1105.2px;font-size:11px;color:#000;letter-spacing:0.000px;white-space:pre;">3.443  A1</span>
<span class="t" style="left:374.50px;top:1105.2px;font-size:11px;color:#000;letter-spacing:-0.100px;white-space:pre;">0.750  G1</span>
<span class="t" style="left:534.50px;top:1105.2px;font-size:11px;color:#000;letter-spacing:-0.175px;white-space:pre;">1.000  L1</span>
<span class="t" style="left:14.00px;top:1139.8px;font-size:12px;color:#000;letter-spacing:-0.253px;">View: Full Frame</span>
<div class="b" style="left:222px;top:1141px;width:192px;height:16px;background:#e6e6e6;border:1px solid #bcbcbc;box-sizing:border-box"></div>
<svg class="a" style="left:415px;top:1140px" width="20" height="19" viewBox="415 1140 20 19"><defs><linearGradient id="pg" x1="0" x2="1" y1="0" y2="0"><stop offset="0" stop-color="#ffffff"/><stop offset="1" stop-color="#b4c0da"/></linearGradient></defs><path d="M417.4 1150.6L420.3 1147.2H431.7L432 1153.2L429.8 1156.8H419.2Q417.4 1156.8 417.4 1155Z" fill="#6d82a6"/><path d="M418 1150.4L420.6 1147.6H431.2L429.6 1150.4Z" fill="#dfe6f2"/><path d="M418.1 1150.9H429.6V1156.1H419.2Q418.1 1156.1 418.1 1155Z" fill="url(#pg)"/><path d="M420.6 1148.2L422.7 1143.3L431 1143.7L428.8 1148.5Z" fill="#fff" stroke="#7488aa" stroke-width="0.8"/><path d="M422.8 1146.7H428.2M423.5 1145.2H428.9" stroke="#7488aa" stroke-width="0.8"/><rect x="425.9" y="1151.7" width="3.3" height="3.3" fill="#00c800"/><rect x="426.9" y="1152.7" width="1.2" height="1.2" fill="#7dff5a"/></svg>
<svg class="a" style="left:437.9px;top:1148.0px" width="7.3" height="3.9" viewBox="0 0 7.3 3.9"><path d="M0 0H7.3L3.65 3.9Z" fill="#000"/></svg>
<span class="t" style="left:460.00px;top:1139.8px;font-size:12px;color:#000;transform:scaleX(0.9321);transform-origin:0.00px 0;">PDF session closed</span>
<div class="b" style="left:579px;top:44px;width:430px;height:550px;background:#fcfcfc;border:1px solid #808080;box-sizing:border-box;box-shadow:2px 2px 4px rgba(0,0,0,0.5);clip-path:inset(0px -12px -12px 0px)"></div><div class="b" style="left:580px;top:44px;width:53px;height:1px;background:#f8f8f8"></div><div class="b" style="left:581px;top:46px;width:31px;height:546px;background:linear-gradient(90deg,#fafafa 0%,#f1f1f1 100%)"></div><div class="b" style="left:620px;top:79px;width:387px;height:1px;background:#bcbcbc"></div><div class="b" style="left:620px;top:235px;width:387px;height:1px;background:#bcbcbc"></div><div class="b" style="left:620px;top:301px;width:387px;height:1px;background:#bcbcbc"></div><div class="b" style="left:620px;top:397px;width:387px;height:1px;background:#bcbcbc"></div><div class="b" style="left:620px;top:523px;width:387px;height:1px;background:#bcbcbc"></div><div class="b" style="left:620px;top:559px;width:387px;height:1px;background:#bcbcbc"></div><div class="b" style="left:581px;top:490px;width:426px;height:30px;background:#b5d7f3;border:1px solid #0078d7;box-sizing:border-box"></div><span class="t" style="left:623.00px;top:50.8px;font-size:12px;color:#000;letter-spacing:-0.220px;">Design Code</span><svg class="a" style="left:992px;top:57px" width="5" height="8" viewBox="0 0 5 8"><path d="M0.6 0.2L4.6 3.9L0.6 7.6Z" fill="#000"/></svg><span class="t" style="left:623.00px;top:86.8px;font-size:12px;color:#000;letter-spacing:-0.095px;">Composite Beam to Slab Construction Type Member Groups (Pro)</span><span class="t" style="left:623.00px;top:116.8px;font-size:12px;color:#000;letter-spacing:-0.144px;">Steel and Composite Member Design Groups (Pro)</span><span class="t" style="left:623.00px;top:146.8px;font-size:12px;color:#000;letter-spacing:-0.135px;">Concrete Member Design Groups (Pro)</span><span class="t" style="left:623.00px;top:176.8px;font-size:12px;color:#000;letter-spacing:-0.203px;">Steel Connections Design Groups (Pro)</span><span class="t" style="left:623.00px;top:206.8px;font-size:12px;color:#000;letter-spacing:-0.112px;">Timber Member Design Groups (Pro)</span><span class="t" style="left:623.00px;top:242.8px;font-size:12px;color:#000;letter-spacing:-0.020px;">Column Run Common Sections (splice locations)</span><span class="t" style="left:623.00px;top:272.8px;font-size:12px;color:#000;letter-spacing:0.006px;">Beam Eccentricities for Nominal Column Moments (Pro)</span><span class="t" style="left:623.30px;top:308.8px;font-size:12px;color:#000;letter-spacing:-0.211px;">Steel Member Design</span><span class="t" style="left:623.30px;top:338.8px;font-size:12px;color:#000;letter-spacing:-0.179px;">Composite Deck Steel Beam Member Design</span><span class="t" style="left:623.30px;top:368.8px;font-size:12px;color:#000;letter-spacing:-0.164px;">Steel Connection Design</span><span class="t" style="left:623.30px;top:404.8px;font-size:12px;color:#000;letter-spacing:-0.160px;">Concrete Beam, Column and Pad Design</span><span class="t" style="left:623.30px;top:434.8px;font-size:12px;color:#000;letter-spacing:-0.268px;">Concrete Slab Design</span><span class="t" style="left:623.30px;top:464.8px;font-size:12px;color:#000;letter-spacing:-0.100px;">Concrete Slab Deflection and Crack Control</span><span class="t" style="left:623.30px;top:494.8px;font-size:12px;color:#000;transform:scaleX(0.9465);transform-origin:0.00px 0;">Pile Cap Design</span><span class="t" style="left:623.30px;top:530.8px;font-size:12px;color:#000;letter-spacing:-0.079px;">Timber Member Design</span><span class="t" style="left:623.30px;top:566.8px;font-size:12px;color:#000;letter-spacing:-0.226px;">Manage Design Briefs</span><svg class="a" style="left:992px;top:573px" width="5" height="8" viewBox="0 0 5 8"><path d="M0.6 0.2L4.6 3.9L0.6 7.6Z" fill="#000"/></svg><svg class="a" style="left:580px;top:300px" width="40" height="260" viewBox="580 300 40 260"><path d="M588.9 309.9H603.1V313.8H597.9V324.2H603.1V328H588.9V324.2H594.1V313.8H588.9Z" fill="none" stroke="#3c3c3c" stroke-width="1.8"/><path d="M586.9 340.1H604.8V343.9H586.9Z" fill="none" stroke="#3c3c3c" stroke-width="1.8"/><path d="M592 347H599.8M589.9 357.8H602M596 347V357.8" stroke="#3c3c3c" stroke-width="1.9"/><path d="M586.9 388.8V373.3H591V388.8" fill="none" stroke="#3c3c3c" stroke-width="1.8"/><path d="M591.4 373.4L605.9 369.9M591.4 378.1L605.9 373.8M591.4 385L597 379.3Q600 376.3 603 375" fill="none" stroke="#3c3c3c" stroke-width="1.7"/><rect x="589.2" y="406.1" width="13.8" height="17.5" fill="none" stroke="#3c3c3c" stroke-width="1.8"/><path d="M591.3 408.9H593M599.4 408.9H601.1M591.3 420.8H593M595.4 420.8H597.1M599.4 420.8H601.1" stroke="#3c3c3c" stroke-width="1.7"/><path d="M586.2 436.4H605.9M586.2 453.6H605.9" stroke="#3c3c3c" stroke-width="0.9"/><path d="M587.2 439.5H605.2M587.2 450.2H605.2" stroke="#3c3c3c" stroke-width="1.7"/><path d="M592.1 440V442.6M596.3 440V442.6M600.6 440V442.6M592.1 447.3V450M596.3 447.3V450M600.6 447.3V450" stroke="#3c3c3c" stroke-width="1.5"/><path d="M586.2 468.3Q596.1 473.7 605.9 468.3" fill="none" stroke="#3c3c3c" stroke-width="1.5"/><path d="M586.2 480.3Q596.1 484.7 605.9 480.3" fill="none" stroke="#3c3c3c" stroke-width="1.7"/><path d="M592.1 477.3V481M596.3 476V482M600.6 477.3V481" stroke="#3c3c3c" stroke-width="1.3"/><path d="M587 496.5H605.1V503L600.2 512.6H592.9L587 503Z" fill="none" stroke="#3c3c3c" stroke-width="1.8"/><circle cx="591.7" cy="500.6" r="1.6" fill="#3c3c3c"/><circle cx="600.7" cy="500.6" r="1.6" fill="#3c3c3c"/><circle cx="596.3" cy="507.7" r="1.6" fill="#3c3c3c"/><rect x="588" y="532.9" width="16.4" height="16" fill="none" stroke="#3c3c3c" stroke-width="1.7"/><path d="M588 538.5Q594 538 595.5 533M588 542.8Q598 542 599.8 533M589 547.5Q602 546 604.3 535.5M597 549Q603.5 547.5 604.4 542.5" fill="none" stroke="#3c3c3c" stroke-width="1.5"/></svg>
<svg class="a" style="left:767px;top:509px" width="14" height="20" viewBox="0 0 14 20"><path d="M0.5 0.7V16.2L4.1 12.9L6.6 18.8L9 17.8L6.5 12H11.6Z" fill="#fff" stroke="#000" stroke-width="1"/></svg>
</body></html>
